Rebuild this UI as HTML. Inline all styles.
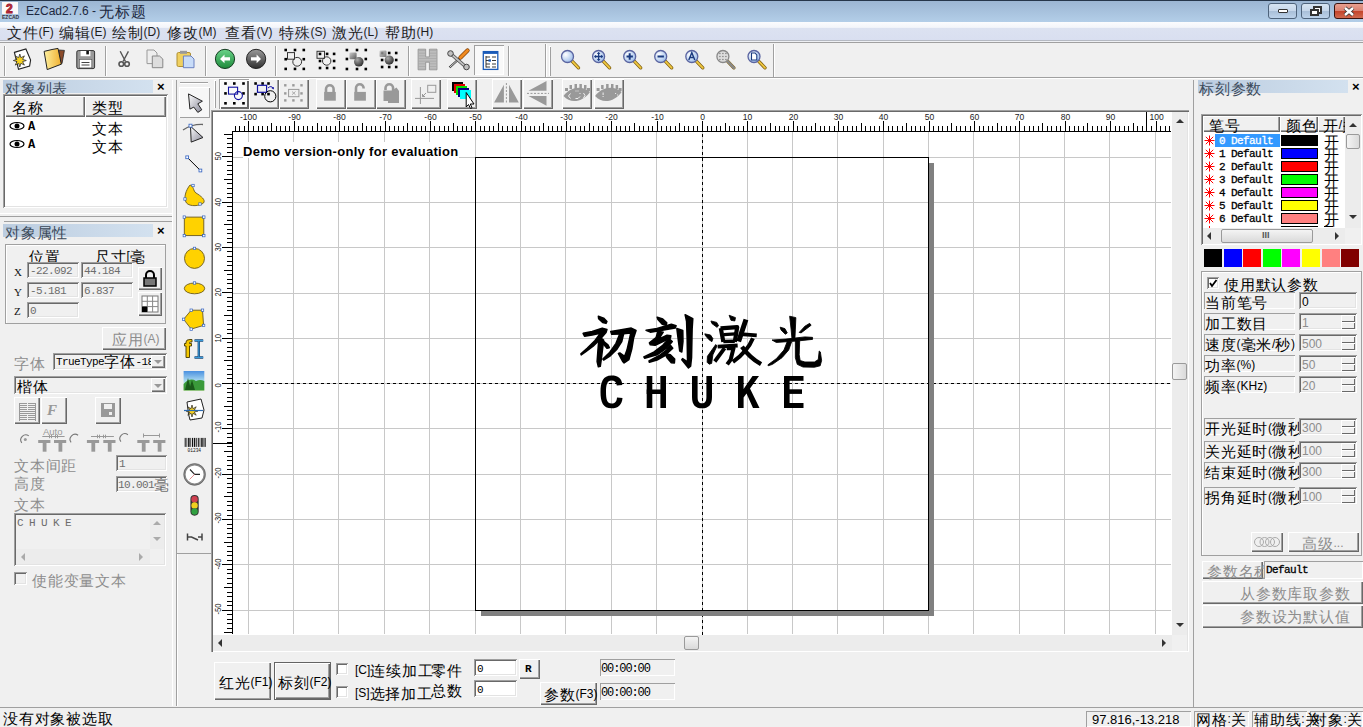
<!DOCTYPE html><html><head><meta charset="utf-8"><style>
html,body{font-family:Liberation Sans;margin:0;padding:0;width:1363px;height:727px;overflow:hidden;background:#f0f0f0;position:relative}
.a{position:absolute}
.t{white-space:pre;line-height:1}
.c{font-family:Liberation Sans;font-size:15px;line-height:0;position:relative;top:1.5px;letter-spacing:0.75px;font-weight:normal;font-style:normal;-webkit-text-stroke:0}
svg{overflow:visible}
</style></head><body>
<div class="a " style="left:0px;top:0px;width:1363px;height:1px;background:#26364a"></div>
<div class="a " style="left:0px;top:1px;width:1363px;height:21px;background:linear-gradient(#9cb6d3,#b3cee8)"></div>
<div class="a " style="left:2px;top:2px;width:16px;height:12px;background:#fdf8f8"></div>
<div class="a t" style="left:6px;top:2px;font:bold 12px Liberation Sans;color:#c83040;-webkit-text-stroke:0.9px #a02030">2</div>
<div class="a t" style="left:2px;top:14px;font:bold 5px Liberation Sans;color:#334;letter-spacing:0px">EZCAD</div>
<div class="a t" style="left:26px;top:4px;font:12px Liberation Sans;color:#1c2840">EzCad2.7.6 - <span class="c">无标题</span></div>
<div class="a " style="left:1268px;top:3px;width:29px;height:16px;border:1px solid #4e637b;border-radius:3px;background:linear-gradient(#d6e4f2 0,#c5d6ea 50%,#a9bfd8 51%,#bcd2ea 100%);box-sizing:border-box"></div>
<div class="a " style="left:1301px;top:3px;width:29px;height:16px;border:1px solid #4e637b;border-radius:3px;background:linear-gradient(#d6e4f2 0,#c5d6ea 50%,#a9bfd8 51%,#bcd2ea 100%);box-sizing:border-box"></div>
<div class="a " style="left:1278px;top:9px;width:10px;height:4px;background:#fff;border:1px solid #333;box-sizing:border-box;border-radius:1px"></div>
<div class="a " style="left:1313px;top:6px;width:9px;height:8px;border:2px solid #333;background:#fff;box-sizing:border-box"></div>
<div class="a " style="left:1310px;top:9px;width:9px;height:7px;border:2px solid #333;background:#fff;box-sizing:border-box"></div>
<div class="a " style="left:1334px;top:3px;width:32px;height:16px;border:1px solid #3b1410;border-radius:3px;background:linear-gradient(#e8a090 0,#d98070 50%,#c4432a 51%,#d06a50 100%);box-sizing:border-box"></div>
<svg class="a" style="left:1342px;top:6px" width="14" height="11" viewBox="0 0 14 11"><path d="M3,2 L11,9 M11,2 L3,9" stroke="#333" stroke-width="4"/><path d="M3,2 L11,9 M11,2 L3,9" stroke="#fff" stroke-width="2.4"/></svg>
<div class="a " style="left:0px;top:22px;width:1363px;height:18px;background:linear-gradient(#fbfcfe 0,#f3f5fa 30%,#dce2f1 35%,#d9dff0 100%)"></div>
<div class="a t" style="left:7px;top:25px;font:12px Liberation Sans;color:#1e1e1e"><span class="c">文件</span>(F)</div>
<div class="a t" style="left:59px;top:25px;font:12px Liberation Sans;color:#1e1e1e"><span class="c">编辑</span>(E)</div>
<div class="a t" style="left:112px;top:25px;font:12px Liberation Sans;color:#1e1e1e"><span class="c">绘制</span>(D)</div>
<div class="a t" style="left:167px;top:25px;font:12px Liberation Sans;color:#1e1e1e"><span class="c">修改</span>(M)</div>
<div class="a t" style="left:225px;top:25px;font:12px Liberation Sans;color:#1e1e1e"><span class="c">查看</span>(V)</div>
<div class="a t" style="left:279px;top:25px;font:12px Liberation Sans;color:#1e1e1e"><span class="c">特殊</span>(S)</div>
<div class="a t" style="left:332px;top:25px;font:12px Liberation Sans;color:#1e1e1e"><span class="c">激光</span>(L)</div>
<div class="a t" style="left:385px;top:25px;font:12px Liberation Sans;color:#1e1e1e"><span class="c">帮助</span>(H)</div>
<div class="a " style="left:0px;top:40px;width:1363px;height:1px;background:#b5b9c2"></div>
<div class="a " style="left:0px;top:41px;width:1363px;height:1px;background:#eef0f4"></div>
<div class="a " style="left:0px;top:42px;width:1363px;height:1px;background:#a0a0a0"></div>
<div class="a " style="left:0px;top:43px;width:1363px;height:684px;background:#f0f0f0"></div>
<div class="a " style="left:0px;top:77px;width:1363px;height:1px;background:#a0a0a0"></div>
<div class="a " style="left:0px;top:78px;width:1363px;height:1px;background:#fff"></div>
<div class="a " style="left:4px;top:46px;width:1px;height:30px;background:#a0a0a0;box-shadow:1px 0 #fff"></div>
<div class="a " style="left:105px;top:46px;width:1px;height:30px;background:#a0a0a0;box-shadow:1px 0 #fff"></div>
<div class="a " style="left:205px;top:46px;width:1px;height:30px;background:#a0a0a0;box-shadow:1px 0 #fff"></div>
<div class="a " style="left:275px;top:46px;width:1px;height:30px;background:#a0a0a0;box-shadow:1px 0 #fff"></div>
<div class="a " style="left:408px;top:46px;width:1px;height:30px;background:#a0a0a0;box-shadow:1px 0 #fff"></div>
<div class="a " style="left:508px;top:46px;width:1px;height:30px;background:#a0a0a0;box-shadow:1px 0 #fff"></div>
<div class="a " style="left:545px;top:44px;width:1px;height:33px;background:#a0a0a0;box-shadow:1px 0 #fff"></div>
<div class="a " style="left:549px;top:46px;width:2px;height:30px;box-shadow:inset 1px 1px #fff,inset -1px -1px #a0a0a0"></div>
<div class="a " style="left:773px;top:44px;width:1px;height:33px;background:#a0a0a0;box-shadow:1px 0 #fff"></div>
<div class="a " style="left:474px;top:45px;width:30px;height:30px;background:#f9f9f9;box-shadow:inset 1px 1px #a0a0a0,inset -1px -1px #fff"></div>
<div class="a " style="left:3px;top:80px;width:150px;height:13px;background:linear-gradient(90deg,#bccde0,#d3e1ef)"></div>
<div class="a t" style="left:5px;top:80px;font:13px Liberation Sans;color:#3c4a5a"><span class="c">对象列表</span></div>
<div class="a t" style="left:157px;top:79px;font:bold 13px Liberation Sans;color:#000">×</div>
<div class="a " style="left:3px;top:94px;width:165px;height:114px;background:#fff;box-shadow:inset 1px 1px #a0a0a0,inset -1px -1px #fff,inset 2px 2px #696969,inset -2px -2px #e3e3e3"></div>
<div class="a " style="left:5px;top:96px;width:161px;height:21px;background:#f0f0f0"></div>
<div class="a " style="left:5px;top:96px;width:80px;height:21px;background:#f0f0f0;box-shadow:inset 1px 1px #fff,inset -1px -1px #696969,inset -2px -2px #a0a0a0"></div>
<div class="a " style="left:85px;top:96px;width:81px;height:21px;background:#f0f0f0;box-shadow:inset 1px 1px #fff,inset -1px -1px #696969,inset -2px -2px #a0a0a0"></div>
<div class="a t" style="left:12px;top:100px;font:12px Liberation Sans;color:#000"><span class="c">名称</span></div>
<div class="a t" style="left:92px;top:100px;font:12px Liberation Sans;color:#000"><span class="c">类型</span></div>
<div class="a t" style="left:28px;top:120px;font:bold 12px Liberation Mono;color:#000">A</div>
<div class="a t" style="left:92px;top:121px;font:12px Liberation Sans;color:#000"><span class="c">文本</span></div>
<svg class="a" style="left:9px;top:121px" width="16" height="10" viewBox="0 0 16 10"><ellipse cx="8" cy="5" rx="7" ry="3.5" fill="none" stroke="#000" stroke-width="1.2"/><circle cx="8" cy="5" r="2.5" fill="#000"/></svg>
<div class="a t" style="left:28px;top:138px;font:bold 12px Liberation Mono;color:#000">A</div>
<div class="a t" style="left:92px;top:139px;font:12px Liberation Sans;color:#000"><span class="c">文本</span></div>
<svg class="a" style="left:9px;top:139px" width="16" height="10" viewBox="0 0 16 10"><ellipse cx="8" cy="5" rx="7" ry="3.5" fill="none" stroke="#000" stroke-width="1.2"/><circle cx="8" cy="5" r="2.5" fill="#000"/></svg>
<div class="a " style="left:0px;top:213px;width:172px;height:1px;background:#fff"></div>
<div class="a " style="left:0px;top:216px;width:172px;height:1px;background:#a0a0a0"></div>
<div class="a " style="left:4px;top:221px;width:168px;height:1px;background:#a0a0a0"></div>
<div class="a " style="left:3px;top:224px;width:150px;height:13px;background:linear-gradient(90deg,#bccde0,#d3e1ef)"></div>
<div class="a t" style="left:5px;top:224px;font:13px Liberation Sans;color:#3c4a5a"><span class="c">对象属性</span></div>
<div class="a t" style="left:157px;top:223px;font:bold 13px Liberation Sans;color:#000">×</div>
<div class="a " style="left:5px;top:244px;width:161px;height:80px;box-shadow:inset 1px 1px #a0a0a0,inset -1px -1px #a0a0a0,inset 2px 2px #fff"></div>
<div class="a t" style="left:29px;top:249px;font:12px Liberation Sans;color:#000"><span class="c">位置</span></div>
<div class="a t" style="left:95px;top:249px;font:12px Liberation Sans;color:#000"><span class="c">尺寸</span>[<span class="c">毫</span></div>
<div class="a t" style="left:14px;top:266px;font:11px Liberation Serif;color:#111">X</div>
<div class="a t" style="left:14px;top:286px;font:11px Liberation Serif;color:#111">Y</div>
<div class="a t" style="left:14px;top:305px;font:11px Liberation Serif;color:#111">Z</div>
<div class="a " style="left:27px;top:262px;width:52px;height:16px;background:#f0f0f0;box-shadow:inset 1px 1px #a0a0a0,inset -1px -1px #fff,inset 2px 2px #696969,inset -2px -2px #e3e3e3"></div>
<div class="a t" style="left:30px;top:265px;font:11px Liberation Mono;letter-spacing:-0.6px;color:#6d6d6d">-22.092</div>
<div class="a " style="left:81px;top:262px;width:52px;height:16px;background:#f0f0f0;box-shadow:inset 1px 1px #a0a0a0,inset -1px -1px #fff,inset 2px 2px #696969,inset -2px -2px #e3e3e3"></div>
<div class="a t" style="left:84px;top:265px;font:11px Liberation Mono;letter-spacing:-0.6px;color:#6d6d6d">44.184</div>
<div class="a " style="left:27px;top:282px;width:52px;height:16px;background:#f0f0f0;box-shadow:inset 1px 1px #a0a0a0,inset -1px -1px #fff,inset 2px 2px #696969,inset -2px -2px #e3e3e3"></div>
<div class="a t" style="left:30px;top:285px;font:11px Liberation Mono;letter-spacing:-0.6px;color:#6d6d6d">-5.181</div>
<div class="a " style="left:81px;top:282px;width:52px;height:16px;background:#f0f0f0;box-shadow:inset 1px 1px #a0a0a0,inset -1px -1px #fff,inset 2px 2px #696969,inset -2px -2px #e3e3e3"></div>
<div class="a t" style="left:84px;top:285px;font:11px Liberation Mono;letter-spacing:-0.6px;color:#6d6d6d">6.837</div>
<div class="a " style="left:27px;top:302px;width:52px;height:16px;background:#f0f0f0;box-shadow:inset 1px 1px #a0a0a0,inset -1px -1px #fff,inset 2px 2px #696969,inset -2px -2px #e3e3e3"></div>
<div class="a t" style="left:30px;top:305px;font:11px Liberation Mono;letter-spacing:-0.6px;color:#6d6d6d">0</div>
<div class="a " style="left:138px;top:267px;width:24px;height:23px;background:#f0f0f0;box-shadow:inset 1px 1px #fff,inset -1px -1px #696969,inset -2px -2px #a0a0a0"></div>
<svg class="a" style="left:141px;top:270px" width="18" height="17" viewBox="0 0 18 17"><path d="M5,8 V5 a4,4 0 0 1 8,0 V8" fill="none" stroke="#000" stroke-width="2"/><rect x="3" y="8" width="12" height="8" fill="#777" stroke="#000" stroke-width="1.5"/></svg>
<div class="a " style="left:138px;top:292px;width:24px;height:24px;background:#f0f0f0;box-shadow:inset 1px 1px #fff,inset -1px -1px #696969,inset -2px -2px #a0a0a0"></div>
<svg class="a" style="left:141px;top:295px" width="18" height="18" viewBox="0 0 18 18"><rect x="1" y="1" width="16" height="16" fill="#fff" stroke="#777"/><path d="M6.3,1V17M11.6,1V17M1,6.3H17M1,11.6H17" stroke="#888"/><rect x="1" y="11.6" width="5.3" height="5.4" fill="#000"/></svg>
<div class="a " style="left:102px;top:327px;width:64px;height:23px;background:#f0f0f0;box-shadow:inset 1px 1px #fff,inset -1px -1px #696969,inset -2px -2px #a0a0a0"></div>
<div class="a t" style="left:112px;top:332px;font:12px Liberation Sans;color:#8d8d8d"><span class="c">应用</span>(A)</div>
<div class="a t" style="left:14px;top:356px;font:12px Liberation Sans;color:#8d8d8d"><span class="c">字体</span></div>
<div class="a " style="left:53px;top:353px;width:114px;height:17px;background:#f0f0f0;box-shadow:inset 1px 1px #a0a0a0,inset -1px -1px #fff,inset 2px 2px #696969,inset -2px -2px #e3e3e3"></div>
<div class="a t" style="left:56px;top:356px;font:11px Liberation Mono;letter-spacing:-0.6px;color:#000">TrueType<span class="c">字体</span>-180</div>
<div class="a " style="left:151px;top:355px;width:14px;height:13px;background:#f0f0f0;box-shadow:inset 1px 1px #fff,inset -1px -1px #696969,inset -2px -2px #a0a0a0"></div>
<svg class="a" style="left:153px;top:359px" width="10" height="6" viewBox="0 0 10 6"><path d="M1,1H9L5,5Z" fill="#999"/></svg>
<div class="a " style="left:14px;top:376px;width:153px;height:18px;background:#f0f0f0;box-shadow:inset 1px 1px #a0a0a0,inset -1px -1px #fff,inset 2px 2px #696969,inset -2px -2px #e3e3e3"></div>
<div class="a t" style="left:17px;top:379px;font:12px Liberation Sans;color:#000"><span class="c">楷体</span></div>
<div class="a " style="left:151px;top:378px;width:14px;height:14px;background:#f0f0f0;box-shadow:inset 1px 1px #fff,inset -1px -1px #696969,inset -2px -2px #a0a0a0"></div>
<svg class="a" style="left:153px;top:383px" width="10" height="6" viewBox="0 0 10 6"><path d="M1,1H9L5,5Z" fill="#999"/></svg>
<div class="a " style="left:14px;top:397px;width:26px;height:27px;background:#f0f0f0;box-shadow:inset 1px 1px #fff,inset -1px -1px #696969,inset -2px -2px #a0a0a0"></div>
<div class="a " style="left:41px;top:397px;width:26px;height:27px;background:#f0f0f0;box-shadow:inset 1px 1px #fff,inset -1px -1px #696969,inset -2px -2px #a0a0a0"></div>
<div class="a " style="left:95px;top:397px;width:26px;height:27px;background:#f0f0f0;box-shadow:inset 1px 1px #fff,inset -1px -1px #696969,inset -2px -2px #a0a0a0"></div>
<svg class="a" style="left:0px;top:0px" width="1363" height="727" viewBox="0 0 1363 727"><path d="M19,403.5H27M28,403.5H36M19,405.5H27M28,405.5H36M19,407.5H27M28,407.5H36M19,409.5H27M28,409.5H36M19,411.5H27M28,411.5H36M19,413.5H27M28,413.5H36M19,415.5H27M28,415.5H36M19,417.5H27M28,417.5H36M19,419.5H27M28,419.5H36M19.5,403V421M35.5,403V421M27,411.5H28M27,413.5H28" stroke="#999" stroke-width="1"/></svg>
<div class="a t" style="left:47px;top:402px;font:bold italic 15px Liberation Serif;color:#999">F</div>
<svg class="a" style="left:100px;top:402px" width="16" height="16" viewBox="0 0 16 16"><rect x="1" y="1" width="14" height="14" fill="#999"/><rect x="4" y="2" width="8" height="5" fill="#f0f0f0"/><rect x="9" y="10" width="3" height="3" fill="#f0f0f0"/></svg>
<svg class="a" style="left:0px;top:0px" width="1363" height="727" viewBox="0 0 1363 727"><circle cx="25.3" cy="439.4" r="5" fill="#f0f0f0"/><path d="M21.8,442.9 A5,5 0 0 1 28.8,435.9" stroke="#777" stroke-width="1.1" fill="none"/></svg>
<svg class="a" style="left:0px;top:0px" width="1363" height="727" viewBox="0 0 1363 727"><circle cx="74.6" cy="438.8" r="5" fill="#f0f0f0"/><path d="M71.1,442.3 A5,5 0 0 1 78.1,435.3" stroke="#777" stroke-width="1.1" fill="none"/></svg>
<svg class="a" style="left:0px;top:0px" width="1363" height="727" viewBox="0 0 1363 727"><circle cx="124.4" cy="438.2" r="5" fill="#f0f0f0"/><path d="M120.9,441.7 A5,5 0 0 1 127.9,434.7" stroke="#777" stroke-width="1.1" fill="none"/></svg>
<svg class="a" style="left:0px;top:0px" width="1363" height="727" viewBox="0 0 1363 727"><circle cx="25.3" cy="439.4" r="1.5" fill="#999"/></svg>
<div class="a t" style="left:43px;top:426px;font:9.5px Liberation Sans;color:#999">Auto</div>
<svg class="a" style="left:0px;top:0px" width="1363" height="727" viewBox="0 0 1363 727"><rect x="38.2" y="440" width="12.2" height="3" fill="#999"/><rect x="42.7" y="443" width="3.8" height="8.7" fill="#999"/><rect x="54" y="440" width="12.2" height="3" fill="#999"/><rect x="58.5" y="443" width="3.8" height="8.7" fill="#999"/><rect x="86.9" y="440" width="12.2" height="3" fill="#999"/><rect x="91.4" y="443" width="3.8" height="8.7" fill="#999"/><rect x="103.3" y="440" width="12.2" height="3" fill="#999"/><rect x="107.8" y="443" width="3.8" height="8.7" fill="#999"/><rect x="137.3" y="440" width="12.2" height="3" fill="#999"/><rect x="141.8" y="443" width="3.8" height="8.7" fill="#999"/><rect x="153.2" y="440" width="12.2" height="3" fill="#999"/><rect x="157.7" y="443" width="3.8" height="8.7" fill="#999"/><path d="M42.3,436.5H64.6M91,436.5H113.9" stroke="#999" stroke-width="1"/><path d="M49.5,434.7V438.2M51.5,434.7V438.2M55.5,434.7V438.2M57.5,434.7V438.2M97.5,434.7V438.2M99.5,434.7V438.2M103.5,434.7V438.2M105.5,434.7V438.2" stroke="#999" stroke-width="1"/><path d="M143.5,435.5H159.5M143.5,433.5V437.5M159.5,433.5V437.5" stroke="#999" stroke-width="1"/></svg>
<div class="a t" style="left:14px;top:458px;font:12px Liberation Sans;color:#8d8d8d"><span class="c">文本间距</span></div>
<div class="a " style="left:116px;top:455px;width:51px;height:16px;background:#f0f0f0;box-shadow:inset 1px 1px #a0a0a0,inset -1px -1px #fff,inset 2px 2px #696969,inset -2px -2px #e3e3e3"></div>
<div class="a t" style="left:119px;top:458px;font:11px Liberation Mono;letter-spacing:-0.6px;color:#6d6d6d">1</div>
<div class="a t" style="left:14px;top:476px;font:12px Liberation Sans;color:#8d8d8d"><span class="c">高度</span></div>
<div class="a " style="left:116px;top:476px;width:51px;height:16px;background:#f0f0f0;box-shadow:inset 1px 1px #a0a0a0,inset -1px -1px #fff,inset 2px 2px #696969,inset -2px -2px #e3e3e3"></div>
<div class="a t" style="left:118px;top:479px;font:11px Liberation Mono;letter-spacing:-0.6px;color:#6d6d6d">10.001<span class="c">毫</span></div>
<div class="a t" style="left:14px;top:497px;font:12px Liberation Sans;color:#8d8d8d"><span class="c">文本</span></div>
<div class="a " style="left:14px;top:513px;width:152px;height:53px;background:#f0f0f0;box-shadow:inset 1px 1px #a0a0a0,inset -1px -1px #fff,inset 2px 2px #696969,inset -2px -2px #e3e3e3"></div>
<div class="a t" style="left:17px;top:517px;font:11px Liberation Mono;letter-spacing:-0.6px;color:#6d6d6d">C H U K E</div>
<div class="a " style="left:150px;top:515px;width:14px;height:34px;background:#ececec"></div>
<svg class="a" style="left:152px;top:520px" width="10" height="6" viewBox="0 0 10 6"><path d="M1,5H9L5,1Z" fill="#aaa"/></svg>
<svg class="a" style="left:152px;top:536px" width="10" height="6" viewBox="0 0 10 6"><path d="M1,1H9L5,5Z" fill="#aaa"/></svg>
<div class="a " style="left:16px;top:549px;width:134px;height:15px;background:#ececec"></div>
<svg class="a" style="left:20px;top:552px" width="6" height="10" viewBox="0 0 6 10"><path d="M5,1V9L1,5Z" fill="#aaa"/></svg>
<svg class="a" style="left:138px;top:552px" width="6" height="10" viewBox="0 0 6 10"><path d="M1,1V9L5,5Z" fill="#aaa"/></svg>
<div class="a " style="left:14px;top:572px;width:13px;height:13px;background:#f0f0f0;box-shadow:inset 1px 1px #a0a0a0,inset -1px -1px #fff,inset 2px 2px #696969,inset -2px -2px #e3e3e3"></div>
<div class="a t" style="left:32px;top:573px;font:12px Liberation Sans;color:#8d8d8d"><span class="c">使能变量文本</span></div>
<div class="a " style="left:172px;top:80px;width:1px;height:626px;background:#fff"></div>
<div class="a " style="left:176px;top:80px;width:1px;height:626px;background:#a0a0a0"></div>
<div class="a " style="left:177px;top:80px;width:35px;height:473px;background:#f0f0f0"></div>
<div class="a " style="left:180px;top:82px;width:28px;height:1px;background:#a0a0a0;box-shadow:0 1px #fff"></div>
<div class="a " style="left:179px;top:87px;width:31px;height:31px;background:#f7f7f7;box-shadow:inset 1px 1px #fff,inset -1px -1px #a0a0a0"></div>
<div class="a " style="left:176px;top:553px;width:36px;height:1px;background:#a0a0a0"></div>
<div class="a " style="left:177px;top:554px;width:1px;height:152px;background:#fff"></div>
<div class="a " style="left:214px;top:80px;width:2px;height:28px;box-shadow:inset 1px 1px #fff,inset -1px -1px #a0a0a0"></div>
<div class="a " style="left:219px;top:79px;width:30px;height:30px;box-shadow:inset 1px 1px #fff,inset -1px -1px #696969,inset -2px -2px #a0a0a0"></div>
<div class="a " style="left:249px;top:79px;width:30px;height:30px;box-shadow:inset 1px 1px #fff,inset -1px -1px #696969,inset -2px -2px #a0a0a0"></div>
<div class="a " style="left:279px;top:79px;width:30px;height:30px;box-shadow:inset 1px 1px #fff,inset -1px -1px #696969,inset -2px -2px #a0a0a0"></div>
<div class="a " style="left:316px;top:79px;width:30px;height:30px;box-shadow:inset 1px 1px #fff,inset -1px -1px #696969,inset -2px -2px #a0a0a0"></div>
<div class="a " style="left:346px;top:79px;width:30px;height:30px;box-shadow:inset 1px 1px #fff,inset -1px -1px #696969,inset -2px -2px #a0a0a0"></div>
<div class="a " style="left:376px;top:79px;width:30px;height:30px;box-shadow:inset 1px 1px #fff,inset -1px -1px #696969,inset -2px -2px #a0a0a0"></div>
<div class="a " style="left:411px;top:79px;width:30px;height:30px;box-shadow:inset 1px 1px #fff,inset -1px -1px #696969,inset -2px -2px #a0a0a0"></div>
<div class="a " style="left:447px;top:79px;width:30px;height:30px;box-shadow:inset 1px 1px #fff,inset -1px -1px #696969,inset -2px -2px #a0a0a0"></div>
<div class="a " style="left:492px;top:79px;width:30px;height:30px;box-shadow:inset 1px 1px #fff,inset -1px -1px #696969,inset -2px -2px #a0a0a0"></div>
<div class="a " style="left:523px;top:79px;width:30px;height:30px;box-shadow:inset 1px 1px #fff,inset -1px -1px #696969,inset -2px -2px #a0a0a0"></div>
<div class="a " style="left:562px;top:79px;width:30px;height:30px;box-shadow:inset 1px 1px #fff,inset -1px -1px #696969,inset -2px -2px #a0a0a0"></div>
<div class="a " style="left:594px;top:79px;width:30px;height:30px;box-shadow:inset 1px 1px #fff,inset -1px -1px #696969,inset -2px -2px #a0a0a0"></div>
<div class="a " style="left:219px;top:79px;width:30px;height:30px;background:#f9f9f9;box-shadow:inset 1px 1px #a0a0a0,inset 2px 2px #fff,inset -1px -1px #696969,inset -2px -2px #696969"></div>
<div class="a " style="left:211px;top:110px;width:978px;height:542px;box-shadow:inset 1px 1px #a0a0a0,inset 2px 2px #696969,inset -1px -1px #fff,inset -2px -2px #e3e3e3;background:#fff"></div>
<div class="a " style="left:1172px;top:112px;width:15px;height:523px;background:#ececec"></div>
<div class="a " style="left:213px;top:635px;width:959px;height:16px;background:#ececec"></div>
<div class="a " style="left:1172px;top:635px;width:15px;height:16px;background:#f0f0f0"></div>
<svg class="a" style="left:1175px;top:118px" width="10" height="6" viewBox="0 0 10 6"><path d="M1,5H9L5,1Z" fill="#333"/></svg>
<svg class="a" style="left:1175px;top:622px" width="10" height="6" viewBox="0 0 10 6"><path d="M1,1H9L5,5Z" fill="#333"/></svg>
<svg class="a" style="left:217px;top:638px" width="6" height="10" viewBox="0 0 6 10"><path d="M5,1V9L1,5Z" fill="#333"/></svg>
<svg class="a" style="left:1161px;top:638px" width="6" height="10" viewBox="0 0 6 10"><path d="M1,1V9L5,5Z" fill="#333"/></svg>
<div class="a " style="left:684px;top:636px;width:15px;height:14px;background:linear-gradient(#f4f4f4,#dadada);border:1px solid #9a9a9a;box-sizing:border-box;border-radius:2px"></div>
<div class="a " style="left:1172px;top:363px;width:15px;height:17px;background:linear-gradient(90deg,#f4f4f4,#dadada);border:1px solid #9a9a9a;box-sizing:border-box;border-radius:2px"></div>
<svg class="a" style="left:213px;top:112px" width="959" height="523" viewBox="0 0 959 523"><path d="M35.5,20V522M80.5,20V522M125.5,20V522M171.5,20V522M216.5,20V522M262.5,20V522M307.5,20V522M352.5,20V522M398.5,20V522M443.5,20V522M489.5,20V522M534.5,20V522M579.5,20V522M624.5,20V522M670.5,20V522M715.5,20V522M760.5,20V522M806.5,20V522M851.5,20V522M896.5,20V522M942.5,20V522M20,45.5H958M20,90.5H958M20,135.5H958M20,181.5H958M20,226.5H958M20,271.5H958M20,316.5H958M20,362.5H958M20,407.5H958M20,452.5H958M20,498.5H958" stroke="#c8c8c8" stroke-width="1"/><path d="M489.5,20V523" stroke="#000" stroke-width="1" stroke-dasharray="3,3" stroke-dashoffset="4"/><path d="M20,271.5H959" stroke="#000" stroke-width="1" stroke-dasharray="3,3" stroke-dashoffset="2"/><path d="M20,19.5H958M19.5,19V522M22.5,19V14M26.5,19V14M31.5,19V14M35.5,19V9M40.5,19V14M45.5,19V14M49.5,19V14M54.5,19V14M58.5,19V11M63.5,19V14M67.5,19V14M72.5,19V14M76.5,19V14M81.5,19V9M85.5,19V14M90.5,19V14M94.5,19V14M99.5,19V14M104.5,19V11M108.5,19V14M113.5,19V14M117.5,19V14M122.5,19V14M126.5,19V9M131.5,19V14M135.5,19V14M140.5,19V14M144.5,19V14M149.5,19V11M153.5,19V14M158.5,19V14M162.5,19V14M167.5,19V14M172.5,19V9M176.5,19V14M181.5,19V14M185.5,19V14M190.5,19V14M194.5,19V11M199.5,19V14M203.5,19V14M208.5,19V14M212.5,19V14M217.5,19V9M221.5,19V14M226.5,19V14M231.5,19V14M235.5,19V14M240.5,19V11M244.5,19V14M249.5,19V14M253.5,19V14M258.5,19V14M262.5,19V9M267.5,19V14M271.5,19V14M276.5,19V14M280.5,19V14M285.5,19V11M289.5,19V14M294.5,19V14M299.5,19V14M303.5,19V14M308.5,19V9M312.5,19V14M317.5,19V14M321.5,19V14M326.5,19V14M330.5,19V11M335.5,19V14M339.5,19V14M344.5,19V14M348.5,19V14M353.5,19V9M357.5,19V14M362.5,19V14M367.5,19V14M371.5,19V14M376.5,19V11M380.5,19V14M385.5,19V14M389.5,19V14M394.5,19V14M398.5,19V9M403.5,19V14M407.5,19V14M412.5,19V14M416.5,19V14M421.5,19V11M426.5,19V14M430.5,19V14M435.5,19V14M439.5,19V14M444.5,19V9M448.5,19V14M453.5,19V14M457.5,19V14M462.5,19V14M466.5,19V11M471.5,19V14M475.5,19V14M480.5,19V14M484.5,19V14M489.5,19V9M494.5,19V14M498.5,19V14M503.5,19V14M507.5,19V14M512.5,19V11M516.5,19V14M521.5,19V14M525.5,19V14M530.5,19V14M534.5,19V9M539.5,19V14M543.5,19V14M548.5,19V14M552.5,19V14M557.5,19V11M562.5,19V14M566.5,19V14M571.5,19V14M575.5,19V14M580.5,19V9M584.5,19V14M589.5,19V14M593.5,19V14M598.5,19V14M602.5,19V11M607.5,19V14M611.5,19V14M616.5,19V14M621.5,19V14M625.5,19V9M630.5,19V14M634.5,19V14M639.5,19V14M643.5,19V14M648.5,19V11M652.5,19V14M657.5,19V14M661.5,19V14M666.5,19V14M670.5,19V9M675.5,19V14M679.5,19V14M684.5,19V14M689.5,19V14M693.5,19V11M698.5,19V14M702.5,19V14M707.5,19V14M711.5,19V14M716.5,19V9M720.5,19V14M725.5,19V14M729.5,19V14M734.5,19V14M738.5,19V11M743.5,19V14M747.5,19V14M752.5,19V14M757.5,19V14M761.5,19V9M766.5,19V14M770.5,19V14M775.5,19V14M779.5,19V14M784.5,19V11M788.5,19V14M793.5,19V14M797.5,19V14M802.5,19V14M806.5,19V9M811.5,19V14M816.5,19V14M820.5,19V14M825.5,19V14M829.5,19V11M834.5,19V14M838.5,19V14M843.5,19V14M847.5,19V14M852.5,19V9M856.5,19V14M861.5,19V14M865.5,19V14M870.5,19V14M874.5,19V11M879.5,19V14M884.5,19V14M888.5,19V14M893.5,19V14M897.5,19V9M902.5,19V14M906.5,19V14M911.5,19V14M915.5,19V14M920.5,19V11M924.5,19V14M929.5,19V14M933.5,19V14M938.5,19V14M943.5,19V9M947.5,19V14M952.5,19V14M956.5,19V14M19,520.5H11M19,516.5H14M19,511.5H14M19,507.5H14M19,502.5H14M19,498.5H9M19,493.5H14M19,489.5H14M19,484.5H14M19,480.5H14M19,475.5H11M19,471.5H14M19,466.5H14M19,461.5H14M19,457.5H14M19,452.5H9M19,448.5H14M19,443.5H14M19,439.5H14M19,434.5H14M19,430.5H11M19,425.5H14M19,421.5H14M19,416.5H14M19,412.5H14M19,407.5H9M19,403.5H14M19,398.5H14M19,393.5H14M19,389.5H14M19,384.5H11M19,380.5H14M19,375.5H14M19,371.5H14M19,366.5H14M19,362.5H9M19,357.5H14M19,353.5H14M19,348.5H14M19,344.5H14M19,339.5H11M19,334.5H14M19,330.5H14M19,325.5H14M19,321.5H14M19,316.5H9M19,312.5H14M19,307.5H14M19,303.5H14M19,298.5H14M19,294.5H11M19,289.5H14M19,285.5H14M19,280.5H14M19,276.5H14M19,271.5H9M19,266.5H14M19,262.5H14M19,257.5H14M19,253.5H14M19,248.5H11M19,244.5H14M19,239.5H14M19,235.5H14M19,230.5H14M19,226.5H9M19,221.5H14M19,217.5H14M19,212.5H14M19,208.5H14M19,203.5H11M19,198.5H14M19,194.5H14M19,189.5H14M19,185.5H14M19,180.5H9M19,176.5H14M19,171.5H14M19,167.5H14M19,162.5H14M19,158.5H11M19,153.5H14M19,149.5H14M19,144.5H14M19,139.5H14M19,135.5H9M19,130.5H14M19,126.5H14M19,121.5H14M19,117.5H14M19,112.5H11M19,108.5H14M19,103.5H14M19,99.5H14M19,94.5H14M19,90.5H9M19,85.5H14M19,81.5H14M19,76.5H14M19,71.5H14M19,67.5H11M19,62.5H14M19,58.5H14M19,53.5H14M19,49.5H14M19,44.5H9M19,40.5H14M19,35.5H14M19,31.5H14M19,26.5H14M19,22.5H11" stroke="#000" stroke-width="1"/><path d="M933.5,0V19M0,331.5H19" stroke="#000" stroke-width="1"/><g font-family="Liberation Sans" font-size="9.5" fill="#222"><text transform="translate(35.5,8.299999999999997) scale(0.9,1)" text-anchor="middle">-100</text><text transform="translate(81.5,8.299999999999997) scale(0.9,1)" text-anchor="middle">-90</text><text transform="translate(126.5,8.299999999999997) scale(0.9,1)" text-anchor="middle">-80</text><text transform="translate(172.5,8.299999999999997) scale(0.9,1)" text-anchor="middle">-70</text><text transform="translate(217.5,8.299999999999997) scale(0.9,1)" text-anchor="middle">-60</text><text transform="translate(262.5,8.299999999999997) scale(0.9,1)" text-anchor="middle">-50</text><text transform="translate(308.5,8.299999999999997) scale(0.9,1)" text-anchor="middle">-40</text><text transform="translate(353.5,8.299999999999997) scale(0.9,1)" text-anchor="middle">-30</text><text transform="translate(398.5,8.299999999999997) scale(0.9,1)" text-anchor="middle">-20</text><text transform="translate(444.5,8.299999999999997) scale(0.9,1)" text-anchor="middle">-10</text><text transform="translate(489.5,8.299999999999997) scale(0.9,1)" text-anchor="middle">0</text><text transform="translate(534.5,8.299999999999997) scale(0.9,1)" text-anchor="middle">10</text><text transform="translate(580.5,8.299999999999997) scale(0.9,1)" text-anchor="middle">20</text><text transform="translate(625.5,8.299999999999997) scale(0.9,1)" text-anchor="middle">30</text><text transform="translate(670.5,8.299999999999997) scale(0.9,1)" text-anchor="middle">40</text><text transform="translate(716.5,8.299999999999997) scale(0.9,1)" text-anchor="middle">50</text><text transform="translate(761.5,8.299999999999997) scale(0.9,1)" text-anchor="middle">60</text><text transform="translate(806.5,8.299999999999997) scale(0.9,1)" text-anchor="middle">70</text><text transform="translate(852.5,8.299999999999997) scale(0.9,1)" text-anchor="middle">80</text><text transform="translate(897.5,8.299999999999997) scale(0.9,1)" text-anchor="middle">90</text><text transform="translate(943.5,8.299999999999997) scale(0.9,1)" text-anchor="middle">100</text><text transform="translate(8.300000000000011,502.5) rotate(-90) scale(0.8,1)">-50</text><text transform="translate(8.300000000000011,457.5) rotate(-90) scale(0.8,1)">-40</text><text transform="translate(8.300000000000011,411.5) rotate(-90) scale(0.8,1)">-30</text><text transform="translate(8.300000000000011,366.5) rotate(-90) scale(0.8,1)">-20</text><text transform="translate(8.300000000000011,320.5) rotate(-90) scale(0.8,1)">-10</text><text transform="translate(8.300000000000011,275.5) rotate(-90) scale(0.8,1)">0</text><text transform="translate(8.300000000000011,230.5) rotate(-90) scale(0.8,1)">10</text><text transform="translate(8.300000000000011,184.5) rotate(-90) scale(0.8,1)">20</text><text transform="translate(8.300000000000011,139.5) rotate(-90) scale(0.8,1)">30</text><text transform="translate(8.300000000000011,94.5) rotate(-90) scale(0.8,1)">40</text><text transform="translate(8.300000000000011,48.5) rotate(-90) scale(0.8,1)">50</text></g></svg>
<div class="a " style="left:929px;top:163px;width:5px;height:453px;background:#808080"></div>
<div class="a " style="left:481px;top:611px;width:453px;height:5px;background:#808080"></div>
<div class="a " style="left:475px;top:157px;width:454px;height:454px;border:1px solid #000;box-sizing:border-box"></div>
<div class="a " style="left:243px;top:142px;width:216px;height:16px;background:#fff"></div>
<div class="a t" style="left:243px;top:144px;font:bold 13px Liberation Sans;color:#000;letter-spacing:0.3px">Demo version-only for evaluation</div>
<svg class="a" style="left:0px;top:0px" width="1363" height="727" viewBox="0 0 1363 727"><g fill="#000"><rect x="646.7" y="376" width="5.6" height="32"/><rect x="660.4" y="376" width="5.6" height="32"/><rect x="646.7" y="389.5" width="19" height="4.5"/><rect x="784" y="376" width="5.6" height="32"/><rect x="784" y="376" width="19.5" height="4.8"/><rect x="784" y="389.3" width="18" height="4.6"/><rect x="784" y="403" width="19.5" height="5"/><path d="M622.3,385 C621.8,378 618,375.5 611.5,375.5 C603,375.5 600.5,382 600.5,392 C600.5,402 603,408.3 611.5,408.3 C618,408.3 622,405 622.5,398 L617,397.5 C616.7,401.5 615,403.5 611.5,403.5 C607,403.5 606,399 606,392 C606,385 607,380.5 611.5,380.5 C614.5,380.5 616.5,382 616.8,385.5 Z"/><path d="M692,376 H697.6 V397 C697.6,401.5 699,403.3 702,403.3 C705,403.3 706.4,401.5 706.4,397 V376 H712 V397 C712,405 708.5,408.3 702,408.3 C695.5,408.3 692,405 692,397 Z"/><path d="M738,376 H743.6 V389 L752.5,376 H759 L750,388.5 L759.5,408 H753 L746.5,393.5 L743.6,397.5 V408 H738 Z"/></g></svg>
<svg class="a" style="left:0px;top:0px" width="1363" height="727" viewBox="0 0 1363 727"><g fill="#000"><g transform="translate(575,310) scale(0.095374)" stroke="#000" stroke-width="16" stroke-linejoin="round"><path d="M245,65 L300,85 L335,120 L325,140 L290,130 L248,90Z"/><path d="M85,245 L180,225 L285,190 L335,205 L325,235 L270,300 L190,380 L110,440 L65,470 L62,460 L130,400 L210,320 L265,245 L180,262 L100,275Z"/><path d="M265,290 L300,315 L290,400 L275,520 L265,590 L245,595 L232,540 L240,430 L248,330Z"/><path d="M300,330 L345,365 L360,395 L335,400 L300,360Z"/><path d="M375,225 L470,210 L590,190 L640,215 L615,290 L595,410 L565,520 L515,555 L500,540 L455,455 L470,450 L520,485 L545,420 L570,310 L585,240 L480,252 L385,255Z"/><path d="M475,235 L510,250 L490,330 L440,410 L370,480 L300,525 L292,515 L360,450 L430,350Z"/><path d="M862,75 L920,95 L962,135 L955,160 L915,150 L870,100Z"/><path d="M745,212 L860,195 L1010,150 L1060,165 L1050,190 L900,215 L790,232Z"/><path d="M870,222 L925,232 L895,280 L860,315 L965,265 L1005,270 L1000,295 L840,370 L790,365 L780,345 L850,290Z"/><path d="M985,300 L1020,330 L960,400 L860,470 L730,505 L722,492 L830,440 L920,370Z"/><path d="M1000,370 L1025,400 L940,480 L860,525 L780,548 L776,535 L880,480 L960,420Z"/><path d="M940,455 L1000,470 L1045,515 L1042,555 L1010,552 L965,500Z"/><path d="M1068,195 L1130,215 L1132,330 L1120,440 L1098,430 L1085,330Z"/><path d="M1155,50 L1235,90 L1228,200 L1222,500 L1212,590 L1190,608 L1120,522 L1128,510 L1180,545 L1176,300 L1170,120Z"/></g><g transform="translate(700,310) scale(0.095374)" stroke="#000" stroke-width="9" stroke-linejoin="round"><path d="M115,115 L175,130 L195,165 L178,182 L125,142Z"/><path d="M50,250 L110,262 L135,300 L125,332 L95,312 L58,270Z"/><path d="M78,485 L165,362 L178,378 L135,470 L122,560 L95,568 L75,548Z"/><path d="M305,55 L372,80 L365,115 L325,108Z"/><path d="M940,65 L1005,80 L1000,200 L995,305 L965,310 L955,200Z"/><path d="M840,180 L890,195 L915,240 L895,255 L850,210Z"/><path d="M1150,140 L1165,160 L1060,240 L1040,235 L1100,170Z"/><path d="M755,315 L900,305 L1100,282 L1180,287 L1180,308 L1020,325 L800,340Z"/><path d="M915,330 L960,335 L930,420 L860,500 L760,570 L715,585 L712,575 L800,510 L880,420Z"/><path d="M1000,320 L1045,325 L1040,470 L1050,530 L1100,545 L1200,545 L1240,520 L1250,430 L1262,440 L1275,530 L1260,585 L1200,600 L1080,598 L1020,570 L1000,500Z"/><path d="M218,190 L245,335" fill="none" stroke="#000" stroke-width="44" stroke-linejoin="round"/><path d="M215,192 L390,180 L365,335" fill="none" stroke="#000" stroke-width="44" stroke-linejoin="round"/><path d="M250,258 L370,250" fill="none" stroke="#000" stroke-width="36" stroke-linejoin="round"/><path d="M245,330 L365,328" fill="none" stroke="#000" stroke-width="38" stroke-linejoin="round"/><path d="M185,385 L395,372" fill="none" stroke="#000" stroke-width="40" stroke-linejoin="round"/><path d="M280,400 L352,398 L322,520 L285,570" fill="none" stroke="#000" stroke-width="42" stroke-linejoin="round"/><path d="M258,400 L155,540" fill="none" stroke="#000" stroke-width="40" stroke-linejoin="round"/><path d="M482,100 L405,330" fill="none" stroke="#000" stroke-width="52" stroke-linejoin="round"/><path d="M425,252 L595,266" fill="none" stroke="#000" stroke-width="40" stroke-linejoin="round"/><path d="M555,295 Q500,430 345,545" fill="none" stroke="#000" stroke-width="42" stroke-linejoin="round"/><path d="M440,385 Q520,500 640,568" fill="none" stroke="#000" stroke-width="46" stroke-linejoin="round"/></g></g></svg>
<svg class="a" style="left:0px;top:0px" width="1363" height="727" viewBox="0 0 1363 727"><path d="M14.4,52.4 L25.9,49 L30.6,60 L29.6,66 L18.5,69.3 L17,63 Z" fill="#fff" stroke="#222" stroke-width="1.1"/><path d="M19.8,54.0 L20.9,57.7 L24.4,55.9 L22.6,59.4 L26.3,60.5 L22.6,61.6 L24.4,65.1 L20.9,63.3 L19.8,67.0 L18.7,63.3 L15.2,65.1 L17.0,61.6 L13.3,60.5 L17.0,59.4 L15.2,55.9 L18.7,57.7Z" fill="#f5d020" stroke="#333" stroke-width="0.8"/><path d="M58.6,50 L64.4,50.4 L62,63.6 L60.6,64 Z" fill="#8a4a2a" stroke="#222" stroke-width="0.8"/><defs><linearGradient id="fy" x1="0" x2="1"><stop offset="0" stop-color="#fdf0a0"/><stop offset="1" stop-color="#f0b030"/></linearGradient><radialGradient id="lens" cx="0.35" cy="0.35" r="0.8"><stop offset="0" stop-color="#ffffff"/><stop offset="1" stop-color="#8fb4e8"/></radialGradient><radialGradient id="sph" cx="0.35" cy="0.3" r="0.8"><stop offset="0" stop-color="#aaa"/><stop offset="1" stop-color="#222"/></radialGradient><linearGradient id="sq" x1="0" y1="0" x2="1" y2="1"><stop offset="0" stop-color="#ccc"/><stop offset="1" stop-color="#555"/></linearGradient><linearGradient id="gr" x1="0" y1="0" x2="0" y2="1"><stop offset="0" stop-color="#6ad48a"/><stop offset="1" stop-color="#1e8a3a"/></linearGradient><linearGradient id="dk" x1="0" y1="0" x2="0" y2="1"><stop offset="0" stop-color="#9a9a9a"/><stop offset="1" stop-color="#303030"/></linearGradient><linearGradient id="arr" x1="0" y1="0" x2="1" y2="1"><stop offset="0" stop-color="#fff"/><stop offset="1" stop-color="#8a8a9a"/></linearGradient><linearGradient id="sky" x1="0" y1="0" x2="0" y2="1"><stop offset="0" stop-color="#4a90e0"/><stop offset="0.5" stop-color="#a8d8f0"/><stop offset="1" stop-color="#e8f0a0"/></linearGradient></defs><path d="M44.1,51.4 L52,49.5 L58,48.4 L61.3,64.2 L47.2,69.6 Z" fill="url(#fy)" stroke="#222" stroke-width="1"/><rect x="76.8" y="50.6" width="17.8" height="18" rx="1.5" fill="#9a9a9a" stroke="#333" stroke-width="1"/><rect x="80.6" y="51" width="9.8" height="5.2" fill="#fff"/><rect x="86.3" y="51" width="2.6" height="3.4" fill="#111"/><rect x="79.4" y="59.5" width="12.4" height="8.4" fill="#fff" stroke="#555" stroke-width="0.6"/><path d="M81.5,62.5H89.5M81.5,65H89.5" stroke="#444" stroke-width="1"/><path d="M120.2,51.3 L125.5,61.5 M128.4,51.3 L123,61.5" stroke="#555" stroke-width="1.4"/><circle cx="121.3" cy="64" r="2.3" fill="none" stroke="#555" stroke-width="1.6"/><circle cx="127" cy="64" r="2.3" fill="none" stroke="#555" stroke-width="1.6"/><path d="M147,50 H154 L157,53 V63.6 H147 Z" fill="#eee" stroke="#999" stroke-width="1"/><path d="M152.3,56 H159.5 L162.8,59 V67.7 H152.3 Z" fill="#ddd" stroke="#888" stroke-width="1"/><rect x="177" y="52.5" width="13.5" height="14" rx="1.5" fill="#f0d060" stroke="#b09030" stroke-width="1"/><rect x="180" y="50.8" width="7" height="3" fill="#999"/><path d="M183.4,56 H191 L194,59 V67.7 H183.4 Z" fill="#c8dcf8" stroke="#6a80c0" stroke-width="1"/><circle cx="225" cy="58.9" r="9.6" fill="url(#gr)" stroke="#143a20" stroke-width="1"/><path d="M220,58.9 L224.5,54.5 V57.3 H230 V60.5 H224.5 V63.3 Z" fill="#fff"/><circle cx="256.1" cy="58.9" r="9.6" fill="url(#dk)" stroke="#222" stroke-width="1"/><path d="M261,58.9 L256.6,54.5 V57.3 H251 V60.5 H256.6 V63.3 Z" fill="#fff"/><rect x="284.4" y="48.7" width="2.6" height="2.6" fill="#000"/><rect x="293.7" y="48.7" width="2.6" height="2.6" fill="#000"/><rect x="302.5" y="48.7" width="2.6" height="2.6" fill="#000"/><rect x="284.4" y="57.9" width="2.6" height="2.6" fill="#000"/><rect x="302.5" y="57.9" width="2.6" height="2.6" fill="#000"/><rect x="284.4" y="67.6" width="2.6" height="2.6" fill="#000"/><rect x="293.7" y="67.6" width="2.6" height="2.6" fill="#000"/><rect x="302.5" y="67.6" width="2.6" height="2.6" fill="#000"/><rect x="287.5" y="52.6" width="7" height="6.6" fill="none" stroke="#333" stroke-width="1"/><circle cx="297.2" cy="61.8" r="4.4" fill="none" stroke="#333" stroke-width="1"/><rect x="318.7" y="52.6" width="2.6" height="2.6" fill="#000"/><rect x="325.8" y="52.6" width="2.6" height="2.6" fill="#000"/><rect x="332.8" y="52.6" width="2.6" height="2.6" fill="#000"/><rect x="318.7" y="59.7" width="2.6" height="2.6" fill="#000"/><rect x="332.8" y="59.7" width="2.6" height="2.6" fill="#000"/><rect x="318.7" y="66.7" width="2.6" height="2.6" fill="#000"/><rect x="325.8" y="66.7" width="2.6" height="2.6" fill="#000"/><rect x="332.8" y="66.7" width="2.6" height="2.6" fill="#000"/><rect x="317" y="51.3" width="7.5" height="7" fill="none" stroke="#333" stroke-width="1"/><circle cx="326.7" cy="61" r="4.2" fill="none" stroke="#333" stroke-width="1"/><rect x="345.6" y="48.7" width="2.6" height="2.6" fill="#000"/><rect x="355.7" y="48.7" width="2.6" height="2.6" fill="#000"/><rect x="364.5" y="48.7" width="2.6" height="2.6" fill="#000"/><rect x="345.6" y="57.7" width="2.6" height="2.6" fill="#000"/><rect x="364.5" y="57.7" width="2.6" height="2.6" fill="#000"/><rect x="345.6" y="67.7" width="2.6" height="2.6" fill="#000"/><rect x="355.7" y="67.7" width="2.6" height="2.6" fill="#000"/><rect x="364.5" y="67.7" width="2.6" height="2.6" fill="#000"/><rect x="349.5" y="52.6" width="7.1" height="6.6" rx="1" fill="url(#sq)"/><circle cx="358.8" cy="61.8" r="4.8" fill="url(#sph)"/><rect x="380.8" y="51.7" width="2.6" height="2.6" fill="#000"/><rect x="387.9" y="51.7" width="2.6" height="2.6" fill="#000"/><rect x="394.9" y="51.7" width="2.6" height="2.6" fill="#000"/><rect x="380.8" y="58.7" width="2.6" height="2.6" fill="#000"/><rect x="394.9" y="58.7" width="2.6" height="2.6" fill="#000"/><rect x="380.8" y="65.7" width="2.6" height="2.6" fill="#000"/><rect x="387.9" y="65.7" width="2.6" height="2.6" fill="#000"/><rect x="394.9" y="65.7" width="2.6" height="2.6" fill="#000"/><rect x="379.5" y="50.4" width="7" height="6.6" rx="1" fill="url(#sq)" opacity="0.8"/><circle cx="389.2" cy="60.1" r="4.6" fill="url(#sph)"/><path d="M418.1,49.2H425.7V56.9H429.4V49.2H437V69.8H429.4V62.2H425.7V69.8H418.1Z" fill="#c8c8c8" stroke="#8a8a8a" stroke-width="0.8"/><path d="M418.5,50.5H436.6M418.5,52.1H436.6M418.5,53.7H436.6M418.5,55.3H436.6M418.5,56.9H436.6M418.5,58.5H436.6M418.5,60.1H436.6M418.5,61.7H436.6M418.5,63.3H436.6M418.5,64.9H436.6M418.5,66.5H436.6M418.5,68.1H436.6" stroke="#9a9a9a" stroke-width="0.6" clip-path="url(#hclip)"/><clipPath id="hclip"><path d="M418.1,49.2H425.7V56.9H429.4V49.2H437V69.8H429.4V62.2H425.7V69.8H418.1Z"/></clipPath><path d="M449.5,67.5 L461,57" stroke="#333" stroke-width="2.2"/><path d="M449.5,67.5 L461,57" stroke="#ddd" stroke-width="1"/><path d="M460.5,57.5 L467.5,50.5" stroke="#7a3a00" stroke-width="4.2" stroke-linecap="round"/><path d="M460.5,57.5 L467.5,50.5" stroke="#f08a20" stroke-width="3" stroke-linecap="round"/><path d="M451,54 L466,67" stroke="#444" stroke-width="3.2"/><path d="M451,54 L466,67" stroke="#c0c0c0" stroke-width="1.8"/><circle cx="450.5" cy="53.5" r="2.8" fill="#c0c0c0" stroke="#444"/><circle cx="466.5" cy="67" r="2.8" fill="#c0c0c0" stroke="#444"/><rect x="483.3" y="51.6" width="14.5" height="17.8" fill="#fff" stroke="#1a5ab8" stroke-width="1.3"/><rect x="483.3" y="51.6" width="14.5" height="2.3" fill="#1a5ab8"/><path d="M486,56V67.5M486,57H490M486,60.5H490M486,64H490M486,67H490M492,57H496M492,60.5H496M492,64H496M492,67H496" stroke="#222" stroke-width="0.9"/><rect x="488.5" y="59.3" width="2.4" height="2.4" fill="#1a5ab8"/><path d="M572.3,61.3 L578.5,67.8" stroke="#806010" stroke-width="3.4" stroke-linecap="round"/><path d="M572.3,61.3 L578.5,67.8" stroke="#f0c840" stroke-width="1.8" stroke-linecap="round"/><circle cx="567.5" cy="56.5" r="6" fill="url(#lens)" stroke="#5a64a0" stroke-width="1.3"/><path d="M603.4,61.3 L609.6,67.8" stroke="#806010" stroke-width="3.4" stroke-linecap="round"/><path d="M603.4,61.3 L609.6,67.8" stroke="#f0c840" stroke-width="1.8" stroke-linecap="round"/><circle cx="598.6" cy="56.5" r="6" fill="url(#lens)" stroke="#5a64a0" stroke-width="1.3"/><path d="M594.6,56.5H602.6M598.6,52.5V60.5" stroke="#1a3a80" stroke-width="1.3"/><path d="M594.1,56.5l2,-1.8v3.6zM603.1,56.5l-2,-1.8v3.6zM598.6,52.0l-1.8,2h3.6zM598.6,61.0l-1.8,-2h3.6z" fill="#1a3a80"/><path d="M634.5,61.3 L640.7,67.8" stroke="#806010" stroke-width="3.4" stroke-linecap="round"/><path d="M634.5,61.3 L640.7,67.8" stroke="#f0c840" stroke-width="1.8" stroke-linecap="round"/><circle cx="629.7" cy="56.5" r="6" fill="url(#lens)" stroke="#5a64a0" stroke-width="1.3"/><path d="M626.5,56.5H632.9M629.7,53.3V59.7" stroke="#1a3a80" stroke-width="2"/><path d="M665.5,61.3 L671.7,67.8" stroke="#806010" stroke-width="3.4" stroke-linecap="round"/><path d="M665.5,61.3 L671.7,67.8" stroke="#f0c840" stroke-width="1.8" stroke-linecap="round"/><circle cx="660.7" cy="56.5" r="6" fill="url(#lens)" stroke="#5a64a0" stroke-width="1.3"/><path d="M657.5,56.5H663.9" stroke="#1a3a80" stroke-width="2"/><path d="M696.6,61.3 L702.8,67.8" stroke="#806010" stroke-width="3.4" stroke-linecap="round"/><path d="M696.6,61.3 L702.8,67.8" stroke="#f0c840" stroke-width="1.8" stroke-linecap="round"/><circle cx="691.8" cy="56.5" r="6" fill="url(#lens)" stroke="#5a64a0" stroke-width="1.3"/><path d="M688.8,60.0L691.8,52.7L694.8,60.0M690.0,57.5H693.6" stroke="#1a3a80" stroke-width="1.4" fill="none"/><path d="M727.7,61.3 L733.9,67.8" stroke="#806010" stroke-width="3.4" stroke-linecap="round"/><path d="M727.7,61.3 L733.9,67.8" stroke="#f0c840" stroke-width="1.8" stroke-linecap="round"/><circle cx="722.9" cy="56.5" r="6" fill="#ddd" stroke="#888" stroke-width="1.3"/><path d="M727.7,61.3 L733.9,67.8" stroke="#888" stroke-width="2.6" stroke-linecap="round"/><rect x="719.3" y="52.9" width="1.2" height="1.2" fill="#777"/><rect x="719.3" y="55.9" width="1.2" height="1.2" fill="#777"/><rect x="719.3" y="58.9" width="1.2" height="1.2" fill="#777"/><rect x="722.3" y="52.9" width="1.2" height="1.2" fill="#777"/><rect x="722.3" y="55.9" width="1.2" height="1.2" fill="#777"/><rect x="722.3" y="58.9" width="1.2" height="1.2" fill="#777"/><rect x="725.3" y="52.9" width="1.2" height="1.2" fill="#777"/><rect x="725.3" y="55.9" width="1.2" height="1.2" fill="#777"/><rect x="725.3" y="58.9" width="1.2" height="1.2" fill="#777"/><path d="M758.8,61.3 L765.0,67.8" stroke="#806010" stroke-width="3.4" stroke-linecap="round"/><path d="M758.8,61.3 L765.0,67.8" stroke="#f0c840" stroke-width="1.8" stroke-linecap="round"/><circle cx="754.0" cy="56.5" r="6" fill="url(#lens)" stroke="#5a64a0" stroke-width="1.3"/><path d="M751.5,53.0H755.0L756.8,55.0V60.0H751.5Z" fill="#fff" stroke="#1a3a80" stroke-width="1.1"/><rect x="224.2" y="82.2" width="2.6" height="2.6" fill="#000"/><rect x="233.0" y="82.2" width="2.6" height="2.6" fill="#000"/><rect x="242.2" y="82.2" width="2.6" height="2.6" fill="#000"/><rect x="224.2" y="92.1" width="2.6" height="2.6" fill="#000"/><rect x="242.2" y="92.1" width="2.6" height="2.6" fill="#000"/><rect x="224.2" y="102.0" width="2.6" height="2.6" fill="#000"/><rect x="233.0" y="102.0" width="2.6" height="2.6" fill="#000"/><rect x="242.2" y="102.0" width="2.6" height="2.6" fill="#000"/><rect x="228.5" y="87.2" width="9.1" height="6.9" fill="none" stroke="#1010a0" stroke-width="1.1"/><circle cx="238.4" cy="95.6" r="4" fill="none" stroke="#1010a0" stroke-width="1.1"/><rect x="254.3" y="82.2" width="2.6" height="2.6" fill="#000"/><rect x="261.3" y="82.2" width="2.6" height="2.6" fill="#000"/><rect x="267.2" y="82.2" width="2.6" height="2.6" fill="#000"/><rect x="254.3" y="92.8" width="2.6" height="2.6" fill="#000"/><rect x="261.3" y="92.8" width="2.6" height="2.6" fill="#000"/><rect x="267.2" y="92.8" width="2.6" height="2.6" fill="#000"/><rect x="257.5" y="85.3" width="9.1" height="7" fill="none" stroke="#1010a0" stroke-width="1.2"/><circle cx="270.3" cy="96.3" r="5.6" fill="none" stroke="#000" stroke-width="1"/><path d="M268,88 q3,-3 5.5,0.5" fill="none" stroke="#1010a0" stroke-width="1"/><path d="M273.5,89.5l-2,-1.5l2.5,-1z" fill="#1010a0"/><rect x="284.1" y="84.1" width="2.4" height="2.4" fill="#999"/><rect x="292.2" y="84.1" width="2.4" height="2.4" fill="#999"/><rect x="300.3" y="84.1" width="2.4" height="2.4" fill="#999"/><rect x="284.1" y="92.2" width="2.4" height="2.4" fill="#999"/><rect x="300.3" y="92.2" width="2.4" height="2.4" fill="#999"/><rect x="284.1" y="99.2" width="2.4" height="2.4" fill="#999"/><rect x="292.2" y="99.2" width="2.4" height="2.4" fill="#999"/><rect x="300.3" y="99.2" width="2.4" height="2.4" fill="#999"/><rect x="288.6" y="89.4" width="10.3" height="7.3" fill="none" stroke="#999" stroke-width="1"/><path d="M292,91.5l3.5,3.2M295.5,91.5l-3.5,3.2" stroke="#999" stroke-width="0.8"/><path d="M326,92 v-3 a3.8,3.8 0 0 1 7.6,0 v3" fill="none" stroke="#999" stroke-width="2.6"/><rect x="324.1" y="91.9" width="11.7" height="8.8" fill="#999"/><path d="M356,92 v-4 a3.8,3.8 0 0 1 7.6,0 v0.5" fill="none" stroke="#999" stroke-width="2.6"/><rect x="354.2" y="91.9" width="11.7" height="8.8" fill="#999"/><path d="M385.5,90 v-2 a3.8,3.8 0 0 1 7.6,0 v3" fill="none" stroke="#999" stroke-width="2.6"/><path d="M383.5,90.5 H392 L396.5,87.5 L399,91 V103 H388 V101 H383.5 Z" fill="#999"/><path d="M420.4,87V104M415,98.4H434" stroke="#999" stroke-width="1"/><rect x="427.7" y="85.3" width="8.1" height="7" fill="none" stroke="#999" stroke-width="1"/><path d="M426,93 L422.5,96.5M422.5,94v2.5h2.5" fill="none" stroke="#999" stroke-width="1"/><rect x="452" y="82" width="11" height="9" fill="#000"/><rect x="454" y="84" width="11" height="9" fill="#e00000"/><rect x="456" y="86" width="11" height="9" fill="#00e000"/><rect x="458" y="88" width="11" height="9" fill="#000080"/><rect x="460" y="90" width="11" height="9" fill="#00ffff"/><path d="M466.2,92.5 V107 L468.5,104.5 L470.5,108.5 L472,107.8 L470.3,104 H474 Z" fill="#fff" stroke="#000" stroke-width="1"/><path d="M494.1,102.6H503.9V84.7Z M509,84.7V102.6H518.8Z" fill="#999"/><path d="M506.4,83V104" stroke="#999" stroke-width="1" stroke-dasharray="2,1.5"/><path d="M528.5,90.8L546.5,81.1V90.8Z M528.5,96H546.5V105.7Z" fill="#999"/><path d="M527,93.4H549" stroke="#999" stroke-width="1" stroke-dasharray="2,1.5"/><g transform="translate(0,0)"><path d="M563.5,96 C570,87 582,85 590,92 C584,101 571,105 563.5,96 Z" fill="#999"/><rect x="565" y="88" width="3" height="3" fill="#999"/><rect x="569.5" y="85" width="2.5" height="4" fill="#999"/><rect x="574.5" y="84" width="2.5" height="5" fill="#999"/><rect x="579.4" y="84" width="2.5" height="5" fill="#999"/><rect x="584" y="85" width="2.5" height="4" fill="#999"/><rect x="587" y="88" width="3" height="3" fill="#999"/><path d="M570.5,93.5 L568.5,96 L570.5,98.5 M583.5,93 L585,95.5 L583.5,98" stroke="#f0f0f0" stroke-width="1" fill="none"/><path d="M575.5,98.5 H578 L580,96.5" stroke="#f0f0f0" stroke-width="1" fill="none"/><rect x="575.5" y="90.5" width="1" height="1" fill="#f0f0f0"/><rect x="577.5" y="90.5" width="1" height="1" fill="#f0f0f0"/><rect x="579.5" y="93" width="1" height="1" fill="#f0f0f0"/></g><g transform="translate(31.6,0)"><path d="M563.5,96 C570,87 582,85 590,92 C584,101 571,105 563.5,96 Z" fill="#999"/><rect x="565" y="88" width="3" height="3" fill="#999"/><rect x="569.5" y="85" width="2.5" height="4" fill="#999"/><rect x="574.5" y="84" width="2.5" height="5" fill="#999"/><rect x="579.4" y="84" width="2.5" height="5" fill="#999"/><rect x="584" y="85" width="2.5" height="4" fill="#999"/><rect x="587" y="88" width="3" height="3" fill="#999"/><rect x="571" y="92.5" width="1" height="2.5" fill="#f0f0f0"/><rect x="571" y="96" width="1" height="1" fill="#f0f0f0"/><rect x="583.5" y="93" width="1" height="1" fill="#f0f0f0"/><rect x="585.5" y="94.5" width="1" height="1" fill="#f0f0f0"/></g><path d="M188.5,93.9 L202.4,101.2 L197.8,103.8 L201.8,109.8 L197.8,112.4 L193.8,107.1 L189.9,109.1 Z" fill="url(#arr)" stroke="#222" stroke-width="1"/><path d="M183,130 Q192,124 203,124.5" fill="none" stroke="#666" stroke-width="1.3"/><path d="M190.5,126.3 L203,137.5 L191.2,142.1 Z" fill="url(#arr)" stroke="#222" stroke-width="1"/><rect x="189" y="124.2" width="3" height="3" fill="#fff" stroke="#3060c0" stroke-width="0.8"/><path d="M187.2,157.3 L200.4,170.5" stroke="#000" stroke-width="1"/><rect x="185.8" y="155.9" width="2.8" height="2.8" fill="#fff" stroke="#3060c0" stroke-width="0.8"/><rect x="199" y="169.1" width="2.8" height="2.8" fill="#fff" stroke="#3060c0" stroke-width="0.8"/><path d="M190,185 C186,190 183,198 186.5,203 C190,207 200,206 203.5,203 C206,200 201,196 196,193 C193,191 194,186 190,185 Z" fill="#ffd200" stroke="#6a5a20" stroke-width="0.9"/><rect x="191.8" y="184.3" width="2.4" height="2.4" fill="#fff" stroke="#3060c0" stroke-width="0.7"/><rect x="183.8" y="197.8" width="2.4" height="2.4" fill="#fff" stroke="#3060c0" stroke-width="0.7"/><rect x="198.8" y="202.8" width="2.4" height="2.4" fill="#fff" stroke="#3060c0" stroke-width="0.7"/><rect x="184.3" y="217.1" width="19.5" height="18.5" fill="#ffd200" stroke="#6a5a20" stroke-width="0.9"/><rect x="183.10000000000002" y="215.9" width="2.4" height="2.4" fill="#fff" stroke="#3060c0" stroke-width="0.7"/><rect x="202.60000000000002" y="215.9" width="2.4" height="2.4" fill="#fff" stroke="#3060c0" stroke-width="0.7"/><rect x="183.10000000000002" y="234.4" width="2.4" height="2.4" fill="#fff" stroke="#3060c0" stroke-width="0.7"/><rect x="202.60000000000002" y="234.4" width="2.4" height="2.4" fill="#fff" stroke="#3060c0" stroke-width="0.7"/><circle cx="194.5" cy="258.4" r="10" fill="#ffd200" stroke="#6a5a20" stroke-width="0.9"/><rect x="193.3" y="247.2" width="2.4" height="2.4" fill="#fff" stroke="#3060c0" stroke-width="0.7"/><ellipse cx="194.5" cy="288.4" rx="10.2" ry="5.4" fill="#ffd200" stroke="#6a5a20" stroke-width="0.9"/><rect x="193.3" y="281.8" width="2.4" height="2.4" fill="#fff" stroke="#3060c0" stroke-width="0.7"/><path d="M183.6,319.3 L191.2,310.2 L202.5,310.2 L203.6,325.4 L191.2,329.1 Z" fill="#ffd200" stroke="#6a5a20" stroke-width="0.9"/><rect x="182.4" y="318.1" width="2.4" height="2.4" fill="#fff" stroke="#3060c0" stroke-width="0.7"/><rect x="190.0" y="309.0" width="2.4" height="2.4" fill="#fff" stroke="#3060c0" stroke-width="0.7"/><rect x="201.3" y="309.0" width="2.4" height="2.4" fill="#fff" stroke="#3060c0" stroke-width="0.7"/><rect x="202.4" y="324.2" width="2.4" height="2.4" fill="#fff" stroke="#3060c0" stroke-width="0.7"/><rect x="190.0" y="327.9" width="2.4" height="2.4" fill="#fff" stroke="#3060c0" stroke-width="0.7"/><path d="M186,357.5 V346 H184.5 V343.5 H186 V342 Q186,339.5 190,339.5 H192 V342 H190.5 Q189.5,342 189.5,343 V343.5 H191.5 V346 H189.5 V357.5 Z" fill="#f5c800" stroke="#443800" stroke-width="0.9"/><path d="M194.5,340.5H203.2M194.5,357.5H203.2M198.8,340.5V357.5" stroke="#1a4a7a" stroke-width="2.4"/><path d="M194.5,340.5H203.2M194.5,357.5H203.2M198.8,340.5V357.5" stroke="#3a9ad8" stroke-width="1"/><rect x="183.6" y="371" width="20.7" height="19.5" fill="url(#sky)"/><path d="M183.6,384 Q190,377 196,381 Q200,379 204.3,381 V390.5 H183.6 Z" fill="#3a9a3a"/><path d="M185,390 L188,378 L191,390Z M189,390 L192,380 L195,390Z" fill="#1a5a1a"/><path d="M187,402 L201,399 L204,410 L202,418 L190,420 L188.5,414 Z" fill="#fff" stroke="#222" stroke-width="1"/><path d="M192.0,405.0 L193.0,408.7 L196.2,406.8 L194.3,410.0 L198.0,411.0 L194.3,412.0 L196.2,415.2 L193.0,413.3 L192.0,417.0 L191.0,413.3 L187.8,415.2 L189.7,412.0 L186.0,411.0 L189.7,410.0 L187.8,406.8 L191.0,408.7Z" fill="#f5d020" stroke="#222" stroke-width="0.7"/><path d="M184,410.5 H203" stroke="#2a6ab0" stroke-width="1.2"/><rect x="184.7" y="437.9" width="1" height="9" fill="#111"/><rect x="186.5" y="437.9" width="0.7" height="9" fill="#111"/><rect x="188.1" y="437.9" width="1.5" height="9" fill="#111"/><rect x="190.4" y="437.9" width="0.7" height="9" fill="#111"/><rect x="192.0" y="437.9" width="1" height="9" fill="#111"/><rect x="193.8" y="437.9" width="1.5" height="9" fill="#111"/><rect x="196.2" y="437.9" width="0.7" height="9" fill="#111"/><rect x="197.8" y="437.9" width="1" height="9" fill="#111"/><rect x="199.6" y="437.9" width="0.7" height="9" fill="#111"/><rect x="201.2" y="437.9" width="1.5" height="9" fill="#111"/><rect x="203.5" y="437.9" width="1" height="9" fill="#111"/><rect x="205.3" y="437.9" width="0.7" height="9" fill="#111"/><text x="194.3" y="451.6" font-family="Liberation Mono" font-size="4.5" text-anchor="middle" fill="#111">01234</text><circle cx="194.6" cy="474.4" r="10" fill="#fff" stroke="#888" stroke-width="2"/><circle cx="194.6" cy="474.4" r="10.8" fill="none" stroke="#555" stroke-width="0.6"/><path d="M194.6,474.4 L190,469.5 M194.6,474.4 H200" stroke="#222" stroke-width="1.1"/><path d="M194.6,474.4 L189.5,479.5" stroke="#d04040" stroke-width="0.6"/><rect x="190.4" y="495" width="8.3" height="20.7" rx="4.1" fill="#333"/><circle cx="194.55" cy="499.3" r="3.2" fill="#d04050"/><circle cx="194.55" cy="505.4" r="3.2" fill="#f0d020"/><circle cx="194.55" cy="511.5" r="3.2" fill="#30a040"/><path d="M187.5,533.6V540.5M187.5,537H191.5L198,540M202,533.6V540.5M198,537H202" stroke="#444" stroke-width="1.5" fill="none"/></svg>
<div class="a " style="left:214px;top:662px;width:57px;height:38px;background:#f0f0f0;box-shadow:inset 1px 1px #fff,inset -1px -1px #696969,inset -2px -2px #a0a0a0"></div>
<div class="a t" style="left:219px;top:675px;font:12px Liberation Sans;color:#000"><span class="c">红光</span>(F1)</div>
<div class="a " style="left:274px;top:662px;width:57px;height:38px;background:#f0f0f0;box-shadow:inset 1px 1px #646464,inset -1px -1px #646464,inset 2px 2px #fff,inset -2px -2px #696969,inset -3px -3px #a0a0a0"></div>
<div class="a t" style="left:278px;top:675px;font:12px Liberation Sans;color:#000"><span class="c">标刻</span>(F2)</div>
<div class="a " style="left:336px;top:663px;width:12px;height:12px;background:#fff;box-shadow:inset 1px 1px #a0a0a0,inset -1px -1px #fff,inset 2px 2px #696969,inset -2px -2px #e3e3e3"></div>
<div class="a " style="left:336px;top:686px;width:12px;height:12px;background:#fff;box-shadow:inset 1px 1px #a0a0a0,inset -1px -1px #fff,inset 2px 2px #696969,inset -2px -2px #e3e3e3"></div>
<div class="a t" style="left:355px;top:663px;font:12px Liberation Sans;color:#000">[C]<span class="c">连续加工</span></div>
<div class="a t" style="left:355px;top:686px;font:12px Liberation Sans;color:#000">[S]<span class="c">选择加工</span></div>
<div class="a t" style="left:431px;top:663px;font:12px Liberation Sans;color:#000"><span class="c">零件</span></div>
<div class="a t" style="left:431px;top:683px;font:12px Liberation Sans;color:#000"><span class="c">总数</span></div>
<div class="a " style="left:474px;top:659px;width:43px;height:17px;background:#fff;box-shadow:inset 1px 1px #a0a0a0,inset -1px -1px #fff,inset 2px 2px #696969,inset -2px -2px #e3e3e3"></div>
<div class="a " style="left:474px;top:680px;width:43px;height:17px;background:#fff;box-shadow:inset 1px 1px #a0a0a0,inset -1px -1px #fff,inset 2px 2px #696969,inset -2px -2px #e3e3e3"></div>
<div class="a t" style="left:477px;top:663px;font:11px Liberation Mono;letter-spacing:-0.6px;color:#000">0</div>
<div class="a t" style="left:477px;top:684px;font:11px Liberation Mono;letter-spacing:-0.6px;color:#000">0</div>
<div class="a " style="left:519px;top:659px;width:21px;height:20px;background:#f0f0f0;box-shadow:inset 1px 1px #fff,inset -1px -1px #696969,inset -2px -2px #a0a0a0"></div>
<div class="a t" style="left:525px;top:663px;font:bold 11px Liberation Mono;color:#000">R</div>
<div class="a " style="left:540px;top:682px;width:57px;height:23px;background:#f0f0f0;box-shadow:inset 1px 1px #fff,inset -1px -1px #696969,inset -2px -2px #a0a0a0"></div>
<div class="a t" style="left:544px;top:687px;font:12px Liberation Sans;color:#000"><span class="c">参数</span>(F3)</div>
<div class="a " style="left:600px;top:659px;width:75px;height:17px;background:#f0f0f0;box-shadow:inset 1px 1px #a0a0a0,inset -1px -1px #fff"></div>
<div class="a " style="left:600px;top:683px;width:75px;height:17px;background:#f0f0f0;box-shadow:inset 1px 1px #a0a0a0,inset -1px -1px #fff"></div>
<div class="a t" style="left:601px;top:662px;font:12px Liberation Mono;letter-spacing:-1.1px;color:#000">00:00:00</div>
<div class="a t" style="left:601px;top:686px;font:12px Liberation Mono;letter-spacing:-1.1px;color:#000">00:00:00</div>
<div class="a " style="left:1193px;top:80px;width:1px;height:627px;background:#a0a0a0"></div>
<div class="a " style="left:1198px;top:80px;width:150px;height:13px;background:linear-gradient(90deg,#bccde0,#d3e1ef)"></div>
<div class="a t" style="left:1199px;top:80px;font:13px Liberation Sans;color:#3c4a5a"><span class="c">标刻参数</span></div>
<div class="a t" style="left:1352px;top:79px;font:bold 13px Liberation Sans;color:#000">×</div>
<div class="a " style="left:1201px;top:114px;width:161px;height:131px;background:#fff;box-shadow:inset 1px 1px #a0a0a0,inset -1px -1px #fff,inset 2px 2px #696969,inset -2px -2px #e3e3e3"></div>
<div class="a " style="left:1203px;top:116px;width:142px;height:16px;background:#f0f0f0"></div>
<div class="a " style="left:1203px;top:116px;width:77px;height:16px;background:#f0f0f0;box-shadow:inset 1px 1px #fff,inset -1px -1px #696969,inset -2px -2px #a0a0a0"></div>
<div class="a " style="left:1280px;top:116px;width:38px;height:16px;background:#f0f0f0;box-shadow:inset 1px 1px #fff,inset -1px -1px #696969,inset -2px -2px #a0a0a0"></div>
<div class="a " style="left:1318px;top:116px;width:27px;height:16px;background:#f0f0f0;box-shadow:inset 1px 1px #fff,inset -1px -1px #696969,inset -2px -2px #a0a0a0"></div>
<div class="a t" style="left:1209px;top:118px;font:12px Liberation Sans;color:#000"><span class="c">笔号</span></div>
<div class="a t" style="left:1286px;top:118px;font:12px Liberation Sans;color:#000"><span class="c">颜色</span></div>
<div class="a t" style="left:1323px;top:118px;font:12px Liberation Sans;color:#000"><span class="c">开</span>/<span class="c">关</span></div>
<div class="a " style="left:1345px;top:116px;width:16px;height:112px;background:#ececec"></div>
<svg class="a" style="left:1348px;top:122px" width="10" height="6" viewBox="0 0 10 6"><path d="M1,5H9L5,1Z" fill="#333"/></svg>
<svg class="a" style="left:1348px;top:214px" width="10" height="6" viewBox="0 0 10 6"><path d="M1,1H9L5,5Z" fill="#333"/></svg>
<div class="a " style="left:1346px;top:134px;width:14px;height:15px;background:linear-gradient(90deg,#f4f4f4,#dadada);border:1px solid #9a9a9a;box-sizing:border-box;border-radius:2px"></div>
<div class="a " style="left:1203px;top:228px;width:142px;height:16px;background:#ececec"></div>
<svg class="a" style="left:1206px;top:231px" width="6" height="10" viewBox="0 0 6 10"><path d="M5,1V9L1,5Z" fill="#333"/></svg>
<svg class="a" style="left:1334px;top:231px" width="6" height="10" viewBox="0 0 6 10"><path d="M1,1V9L5,5Z" fill="#333"/></svg>
<div class="a " style="left:1345px;top:228px;width:16px;height:16px;background:#f0f0f0"></div>
<div class="a " style="left:1221px;top:229px;width:92px;height:14px;background:linear-gradient(#f4f4f4,#dadada);border:1px solid #9a9a9a;box-sizing:border-box;border-radius:2px"></div>
<div class="a t" style="left:1262px;top:230px;font:bold 9px Liberation Sans;color:#555">III</div>
<svg class="a" style="left:1204px;top:135px" width="11" height="11" viewBox="0 0 11 11"><path d="M5.5,0.5V10.5M0.5,5.5H10.5M1.8,1.8L9.2,9.2M9.2,1.8L1.8,9.2" stroke="#ff0000" stroke-width="1"/><circle cx="5.5" cy="5.5" r="1.2" fill="#f00"/></svg>
<div class="a " style="left:1215px;top:134px;width:65px;height:13px;background:#3399ff"></div>
<div class="a t" style="left:1219px;top:135px;font:11px Liberation Mono;letter-spacing:-0.6px;color:#fff;-webkit-text-stroke:0.3px #fff">0 Default</div>
<div class="a " style="left:1281px;top:135px;width:37px;height:11px;background:#000000;border:1px solid #000;box-sizing:border-box"></div>
<div class="a t" style="left:1324px;top:134px;font:12px Liberation Sans;color:#000"><span class="c">开</span></div>
<svg class="a" style="left:1204px;top:148px" width="11" height="11" viewBox="0 0 11 11"><path d="M5.5,0.5V10.5M0.5,5.5H10.5M1.8,1.8L9.2,9.2M9.2,1.8L1.8,9.2" stroke="#ff0000" stroke-width="1"/><circle cx="5.5" cy="5.5" r="1.2" fill="#f00"/></svg>
<div class="a t" style="left:1219px;top:148px;font:11px Liberation Mono;letter-spacing:-0.6px;color:#000;-webkit-text-stroke:0.3px #000">1 Default</div>
<div class="a " style="left:1281px;top:148px;width:37px;height:11px;background:#0000ff;border:1px solid #000;box-sizing:border-box"></div>
<div class="a t" style="left:1324px;top:147px;font:12px Liberation Sans;color:#000"><span class="c">开</span></div>
<svg class="a" style="left:1204px;top:161px" width="11" height="11" viewBox="0 0 11 11"><path d="M5.5,0.5V10.5M0.5,5.5H10.5M1.8,1.8L9.2,9.2M9.2,1.8L1.8,9.2" stroke="#ff0000" stroke-width="1"/><circle cx="5.5" cy="5.5" r="1.2" fill="#f00"/></svg>
<div class="a t" style="left:1219px;top:161px;font:11px Liberation Mono;letter-spacing:-0.6px;color:#000;-webkit-text-stroke:0.3px #000">2 Default</div>
<div class="a " style="left:1281px;top:161px;width:37px;height:11px;background:#ff0000;border:1px solid #000;box-sizing:border-box"></div>
<div class="a t" style="left:1324px;top:160px;font:12px Liberation Sans;color:#000"><span class="c">开</span></div>
<svg class="a" style="left:1204px;top:174px" width="11" height="11" viewBox="0 0 11 11"><path d="M5.5,0.5V10.5M0.5,5.5H10.5M1.8,1.8L9.2,9.2M9.2,1.8L1.8,9.2" stroke="#ff0000" stroke-width="1"/><circle cx="5.5" cy="5.5" r="1.2" fill="#f00"/></svg>
<div class="a t" style="left:1219px;top:174px;font:11px Liberation Mono;letter-spacing:-0.6px;color:#000;-webkit-text-stroke:0.3px #000">3 Default</div>
<div class="a " style="left:1281px;top:174px;width:37px;height:11px;background:#00ff00;border:1px solid #000;box-sizing:border-box"></div>
<div class="a t" style="left:1324px;top:173px;font:12px Liberation Sans;color:#000"><span class="c">开</span></div>
<svg class="a" style="left:1204px;top:187px" width="11" height="11" viewBox="0 0 11 11"><path d="M5.5,0.5V10.5M0.5,5.5H10.5M1.8,1.8L9.2,9.2M9.2,1.8L1.8,9.2" stroke="#ff0000" stroke-width="1"/><circle cx="5.5" cy="5.5" r="1.2" fill="#f00"/></svg>
<div class="a t" style="left:1219px;top:187px;font:11px Liberation Mono;letter-spacing:-0.6px;color:#000;-webkit-text-stroke:0.3px #000">4 Default</div>
<div class="a " style="left:1281px;top:187px;width:37px;height:11px;background:#ff00ff;border:1px solid #000;box-sizing:border-box"></div>
<div class="a t" style="left:1324px;top:186px;font:12px Liberation Sans;color:#000"><span class="c">开</span></div>
<svg class="a" style="left:1204px;top:200px" width="11" height="11" viewBox="0 0 11 11"><path d="M5.5,0.5V10.5M0.5,5.5H10.5M1.8,1.8L9.2,9.2M9.2,1.8L1.8,9.2" stroke="#ff0000" stroke-width="1"/><circle cx="5.5" cy="5.5" r="1.2" fill="#f00"/></svg>
<div class="a t" style="left:1219px;top:200px;font:11px Liberation Mono;letter-spacing:-0.6px;color:#000;-webkit-text-stroke:0.3px #000">5 Default</div>
<div class="a " style="left:1281px;top:200px;width:37px;height:11px;background:#ffff00;border:1px solid #000;box-sizing:border-box"></div>
<div class="a t" style="left:1324px;top:199px;font:12px Liberation Sans;color:#000"><span class="c">开</span></div>
<svg class="a" style="left:1204px;top:213px" width="11" height="11" viewBox="0 0 11 11"><path d="M5.5,0.5V10.5M0.5,5.5H10.5M1.8,1.8L9.2,9.2M9.2,1.8L1.8,9.2" stroke="#ff0000" stroke-width="1"/><circle cx="5.5" cy="5.5" r="1.2" fill="#f00"/></svg>
<div class="a t" style="left:1219px;top:213px;font:11px Liberation Mono;letter-spacing:-0.6px;color:#000;-webkit-text-stroke:0.3px #000">6 Default</div>
<div class="a " style="left:1281px;top:213px;width:37px;height:11px;background:#ff8080;border:1px solid #000;box-sizing:border-box"></div>
<div class="a t" style="left:1324px;top:212px;font:12px Liberation Sans;color:#000"><span class="c">开</span></div>
<svg class="a" style="left:1204px;top:226px" width="11" height="2" viewBox="0 0 11 2"><path d="M5.5,0V2" stroke="#f00"/></svg>
<div class="a " style="left:1281px;top:226px;width:37px;height:1px;background:#000"></div>
<div class="a " style="left:1324px;top:226px;width:9px;height:1px;background:#000"></div>
<div class="a " style="left:1203px;top:228px;width:142px;height:0px;"></div>
<div class="a " style="left:1204px;top:249px;width:18px;height:18px;background:#000000"></div>
<div class="a " style="left:1224px;top:249px;width:18px;height:18px;background:#0000ff"></div>
<div class="a " style="left:1243px;top:249px;width:18px;height:18px;background:#ff0000"></div>
<div class="a " style="left:1263px;top:249px;width:18px;height:18px;background:#00ff00"></div>
<div class="a " style="left:1282px;top:249px;width:18px;height:18px;background:#ff00ff"></div>
<div class="a " style="left:1302px;top:249px;width:18px;height:18px;background:#ffff00"></div>
<div class="a " style="left:1322px;top:249px;width:18px;height:18px;background:#ff8080"></div>
<div class="a " style="left:1341px;top:249px;width:18px;height:18px;background:#800000"></div>
<div class="a " style="left:1201px;top:271px;width:161px;height:285px;box-shadow:inset 1px 1px #a0a0a0,inset -1px -1px #a0a0a0,inset 2px 2px #fff"></div>
<div class="a " style="left:1207px;top:277px;width:12px;height:12px;background:#fff;box-shadow:inset 1px 1px #a0a0a0,inset -1px -1px #fff,inset 2px 2px #696969,inset -2px -2px #e3e3e3"></div>
<svg class="a" style="left:1208px;top:278px" width="10" height="10" viewBox="0 0 10 10"><path d="M2,5 L4,8 L8.5,2" stroke="#000" stroke-width="1.8" fill="none"/></svg>
<div class="a t" style="left:1224px;top:277px;font:12px Liberation Sans;color:#000"><span class="c">使用默认参数</span></div>
<div class="a " style="left:1204px;top:292px;width:91px;height:17px;background:#f0f0f0;box-shadow:inset 1px 1px #a0a0a0,inset -1px -1px #fff"></div>
<div class="a t" style="left:1205px;top:295px;font:12px Liberation Sans;color:#000"><span class="c">当前笔号</span></div>
<div class="a " style="left:1299px;top:292px;width:58px;height:17px;background:#f0f0f0;box-shadow:inset 1px 1px #a0a0a0,inset -1px -1px #fff,inset 2px 2px #696969,inset -2px -2px #e3e3e3"></div>
<div class="a t" style="left:1302px;top:295px;font:12px Liberation Sans;color:#000">0</div>
<div class="a " style="left:1204px;top:313px;width:91px;height:17px;background:#f0f0f0;box-shadow:inset 1px 1px #a0a0a0,inset -1px -1px #fff"></div>
<div class="a t" style="left:1205px;top:316px;font:12px Liberation Sans;color:#000"><span class="c">加工数目</span></div>
<div class="a " style="left:1299px;top:313px;width:58px;height:17px;background:#f0f0f0;box-shadow:inset 1px 1px #a0a0a0,inset -1px -1px #fff,inset 2px 2px #696969,inset -2px -2px #e3e3e3"></div>
<div class="a t" style="left:1302px;top:316px;font:12px Liberation Sans;color:#8d8d8d">1</div>
<div class="a " style="left:1341px;top:315px;width:14px;height:7px;box-shadow:inset 1px 1px #fff,inset -1px -1px #696969"></div>
<div class="a " style="left:1341px;top:322px;width:14px;height:7px;box-shadow:inset 1px 1px #fff,inset -1px -1px #696969"></div>
<div class="a " style="left:1204px;top:334px;width:91px;height:17px;background:#f0f0f0;box-shadow:inset 1px 1px #a0a0a0,inset -1px -1px #fff"></div>
<div class="a t" style="left:1205px;top:337px;font:12px Liberation Sans;color:#000"><span class="c">速度</span>(<span class="c">毫米</span>/<span class="c">秒</span>)</div>
<div class="a " style="left:1299px;top:334px;width:58px;height:17px;background:#f0f0f0;box-shadow:inset 1px 1px #a0a0a0,inset -1px -1px #fff,inset 2px 2px #696969,inset -2px -2px #e3e3e3"></div>
<div class="a t" style="left:1302px;top:337px;font:12px Liberation Sans;color:#8d8d8d">500</div>
<div class="a " style="left:1341px;top:336px;width:14px;height:7px;box-shadow:inset 1px 1px #fff,inset -1px -1px #696969"></div>
<div class="a " style="left:1341px;top:343px;width:14px;height:7px;box-shadow:inset 1px 1px #fff,inset -1px -1px #696969"></div>
<div class="a " style="left:1204px;top:355px;width:91px;height:17px;background:#f0f0f0;box-shadow:inset 1px 1px #a0a0a0,inset -1px -1px #fff"></div>
<div class="a t" style="left:1205px;top:358px;font:12px Liberation Sans;color:#000"><span class="c">功率</span>(%)</div>
<div class="a " style="left:1299px;top:355px;width:58px;height:17px;background:#f0f0f0;box-shadow:inset 1px 1px #a0a0a0,inset -1px -1px #fff,inset 2px 2px #696969,inset -2px -2px #e3e3e3"></div>
<div class="a t" style="left:1302px;top:358px;font:12px Liberation Sans;color:#8d8d8d">50</div>
<div class="a " style="left:1341px;top:357px;width:14px;height:7px;box-shadow:inset 1px 1px #fff,inset -1px -1px #696969"></div>
<div class="a " style="left:1341px;top:364px;width:14px;height:7px;box-shadow:inset 1px 1px #fff,inset -1px -1px #696969"></div>
<div class="a " style="left:1204px;top:376px;width:91px;height:17px;background:#f0f0f0;box-shadow:inset 1px 1px #a0a0a0,inset -1px -1px #fff"></div>
<div class="a t" style="left:1205px;top:379px;font:12px Liberation Sans;color:#000"><span class="c">频率</span>(KHz)</div>
<div class="a " style="left:1299px;top:376px;width:58px;height:17px;background:#f0f0f0;box-shadow:inset 1px 1px #a0a0a0,inset -1px -1px #fff,inset 2px 2px #696969,inset -2px -2px #e3e3e3"></div>
<div class="a t" style="left:1302px;top:379px;font:12px Liberation Sans;color:#8d8d8d">20</div>
<div class="a " style="left:1341px;top:378px;width:14px;height:7px;box-shadow:inset 1px 1px #fff,inset -1px -1px #696969"></div>
<div class="a " style="left:1341px;top:385px;width:14px;height:7px;box-shadow:inset 1px 1px #fff,inset -1px -1px #696969"></div>
<div class="a " style="left:1204px;top:418px;width:91px;height:17px;background:#f0f0f0;box-shadow:inset 1px 1px #a0a0a0,inset -1px -1px #fff"></div>
<div class="a t" style="left:1205px;top:421px;font:12px Liberation Sans;color:#000"><span class="c">开光延时</span>(<span class="c">微秒</span>)</div>
<div class="a " style="left:1299px;top:418px;width:58px;height:17px;background:#f0f0f0;box-shadow:inset 1px 1px #a0a0a0,inset -1px -1px #fff,inset 2px 2px #696969,inset -2px -2px #e3e3e3"></div>
<div class="a t" style="left:1302px;top:421px;font:12px Liberation Sans;color:#8d8d8d">300</div>
<div class="a " style="left:1341px;top:420px;width:14px;height:7px;box-shadow:inset 1px 1px #fff,inset -1px -1px #696969"></div>
<div class="a " style="left:1341px;top:427px;width:14px;height:7px;box-shadow:inset 1px 1px #fff,inset -1px -1px #696969"></div>
<div class="a " style="left:1204px;top:441px;width:91px;height:17px;background:#f0f0f0;box-shadow:inset 1px 1px #a0a0a0,inset -1px -1px #fff"></div>
<div class="a t" style="left:1205px;top:444px;font:12px Liberation Sans;color:#000"><span class="c">关光延时</span>(<span class="c">微秒</span>)</div>
<div class="a " style="left:1299px;top:441px;width:58px;height:17px;background:#f0f0f0;box-shadow:inset 1px 1px #a0a0a0,inset -1px -1px #fff,inset 2px 2px #696969,inset -2px -2px #e3e3e3"></div>
<div class="a t" style="left:1302px;top:444px;font:12px Liberation Sans;color:#8d8d8d">100</div>
<div class="a " style="left:1341px;top:443px;width:14px;height:7px;box-shadow:inset 1px 1px #fff,inset -1px -1px #696969"></div>
<div class="a " style="left:1341px;top:450px;width:14px;height:7px;box-shadow:inset 1px 1px #fff,inset -1px -1px #696969"></div>
<div class="a " style="left:1204px;top:462px;width:91px;height:17px;background:#f0f0f0;box-shadow:inset 1px 1px #a0a0a0,inset -1px -1px #fff"></div>
<div class="a t" style="left:1205px;top:465px;font:12px Liberation Sans;color:#000"><span class="c">结束延时</span>(<span class="c">微秒</span>)</div>
<div class="a " style="left:1299px;top:462px;width:58px;height:17px;background:#f0f0f0;box-shadow:inset 1px 1px #a0a0a0,inset -1px -1px #fff,inset 2px 2px #696969,inset -2px -2px #e3e3e3"></div>
<div class="a t" style="left:1302px;top:465px;font:12px Liberation Sans;color:#8d8d8d">300</div>
<div class="a " style="left:1341px;top:464px;width:14px;height:7px;box-shadow:inset 1px 1px #fff,inset -1px -1px #696969"></div>
<div class="a " style="left:1341px;top:471px;width:14px;height:7px;box-shadow:inset 1px 1px #fff,inset -1px -1px #696969"></div>
<div class="a " style="left:1204px;top:487px;width:91px;height:17px;background:#f0f0f0;box-shadow:inset 1px 1px #a0a0a0,inset -1px -1px #fff"></div>
<div class="a t" style="left:1205px;top:490px;font:12px Liberation Sans;color:#000"><span class="c">拐角延时</span>(<span class="c">微秒</span>)</div>
<div class="a " style="left:1299px;top:487px;width:58px;height:17px;background:#f0f0f0;box-shadow:inset 1px 1px #a0a0a0,inset -1px -1px #fff,inset 2px 2px #696969,inset -2px -2px #e3e3e3"></div>
<div class="a t" style="left:1302px;top:490px;font:12px Liberation Sans;color:#8d8d8d">100</div>
<div class="a " style="left:1341px;top:489px;width:14px;height:7px;box-shadow:inset 1px 1px #fff,inset -1px -1px #696969"></div>
<div class="a " style="left:1341px;top:496px;width:14px;height:7px;box-shadow:inset 1px 1px #fff,inset -1px -1px #696969"></div>
<div class="a " style="left:1251px;top:532px;width:32px;height:20px;background:#f0f0f0;box-shadow:inset 1px 1px #fff,inset -1px -1px #696969,inset -2px -2px #a0a0a0"></div>
<svg class="a" style="left:1254px;top:536px" width="26" height="12" viewBox="0 0 26 12"><g fill="none" stroke="#aaa"><circle cx="5" cy="6" r="4.5"/><circle cx="10.5" cy="6" r="4.5"/><circle cx="16" cy="6" r="4.5"/><circle cx="21" cy="6" r="4.5"/></g></svg>
<div class="a " style="left:1288px;top:532px;width:71px;height:20px;background:#f0f0f0;box-shadow:inset 1px 1px #fff,inset -1px -1px #696969,inset -2px -2px #a0a0a0"></div>
<div class="a t" style="left:1302px;top:536px;font:12px Liberation Sans;color:#8d8d8d"><span class="c">高级</span>...</div>
<div class="a " style="left:1202px;top:561px;width:61px;height:18px;background:#f0f0f0;box-shadow:inset 1px 1px #fff,inset -1px -1px #696969,inset -2px -2px #a0a0a0"></div>
<div class="a t" style="left:1207px;top:564px;font:12px Liberation Sans;color:#8d8d8d"><span class="c">参数名称</span></div>
<div class="a " style="left:1264px;top:561px;width:99px;height:18px;background:#f0f0f0;box-shadow:inset 1px 1px #a0a0a0,inset -1px -1px #fff"></div>
<div class="a t" style="left:1266px;top:564px;font:11px Liberation Mono;letter-spacing:-0.6px;color:#000;-webkit-text-stroke:0.3px #000">Default</div>
<div class="a " style="left:1202px;top:581px;width:161px;height:23px;background:#f0f0f0;box-shadow:inset 1px 1px #fff,inset -1px -1px #696969,inset -2px -2px #a0a0a0"></div>
<div class="a t" style="left:1240px;top:586px;font:12px Liberation Sans;color:#8d8d8d"><span class="c">从参数库取参数</span></div>
<div class="a " style="left:1202px;top:605px;width:161px;height:23px;background:#f0f0f0;box-shadow:inset 1px 1px #fff,inset -1px -1px #696969,inset -2px -2px #a0a0a0"></div>
<div class="a t" style="left:1240px;top:609px;font:12px Liberation Sans;color:#8d8d8d"><span class="c">参数设为默认值</span></div>
<div class="a " style="left:0px;top:707px;width:1363px;height:1px;background:#a0a0a0"></div>
<div class="a " style="left:0px;top:708px;width:1363px;height:19px;background:#f0f0f0"></div>
<div class="a t" style="left:3px;top:711px;font:12px Liberation Sans;color:#000"><span class="c">没有对象被选取</span></div>
<div class="a " style="left:1086px;top:711px;width:105px;height:16px;box-shadow:inset 1px 1px #a0a0a0,inset -1px -1px #fff"></div>
<div class="a " style="left:1194px;top:711px;width:55px;height:16px;box-shadow:inset 1px 1px #a0a0a0,inset -1px -1px #fff"></div>
<div class="a " style="left:1252px;top:711px;width:55px;height:16px;box-shadow:inset 1px 1px #a0a0a0,inset -1px -1px #fff"></div>
<div class="a " style="left:1310px;top:711px;width:53px;height:16px;box-shadow:inset 1px 1px #a0a0a0,inset -1px -1px #fff"></div>
<div class="a t" style="left:1092px;top:712px;font:13px Liberation Sans;color:#000">97.816,-13.218</div>
<div class="a t" style="left:1196px;top:712px;font:12px Liberation Sans;color:#000"><span class="c">网格</span>:<span class="c">关</span></div>
<div class="a t" style="left:1254px;top:712px;font:12px Liberation Sans;color:#000"><span class="c">辅助线</span>:<span class="c">关</span></div>
<div class="a t" style="left:1312px;top:712px;font:12px Liberation Sans;color:#000"><span class="c">对象</span>:<span class="c">关</span></div>
</body></html>
